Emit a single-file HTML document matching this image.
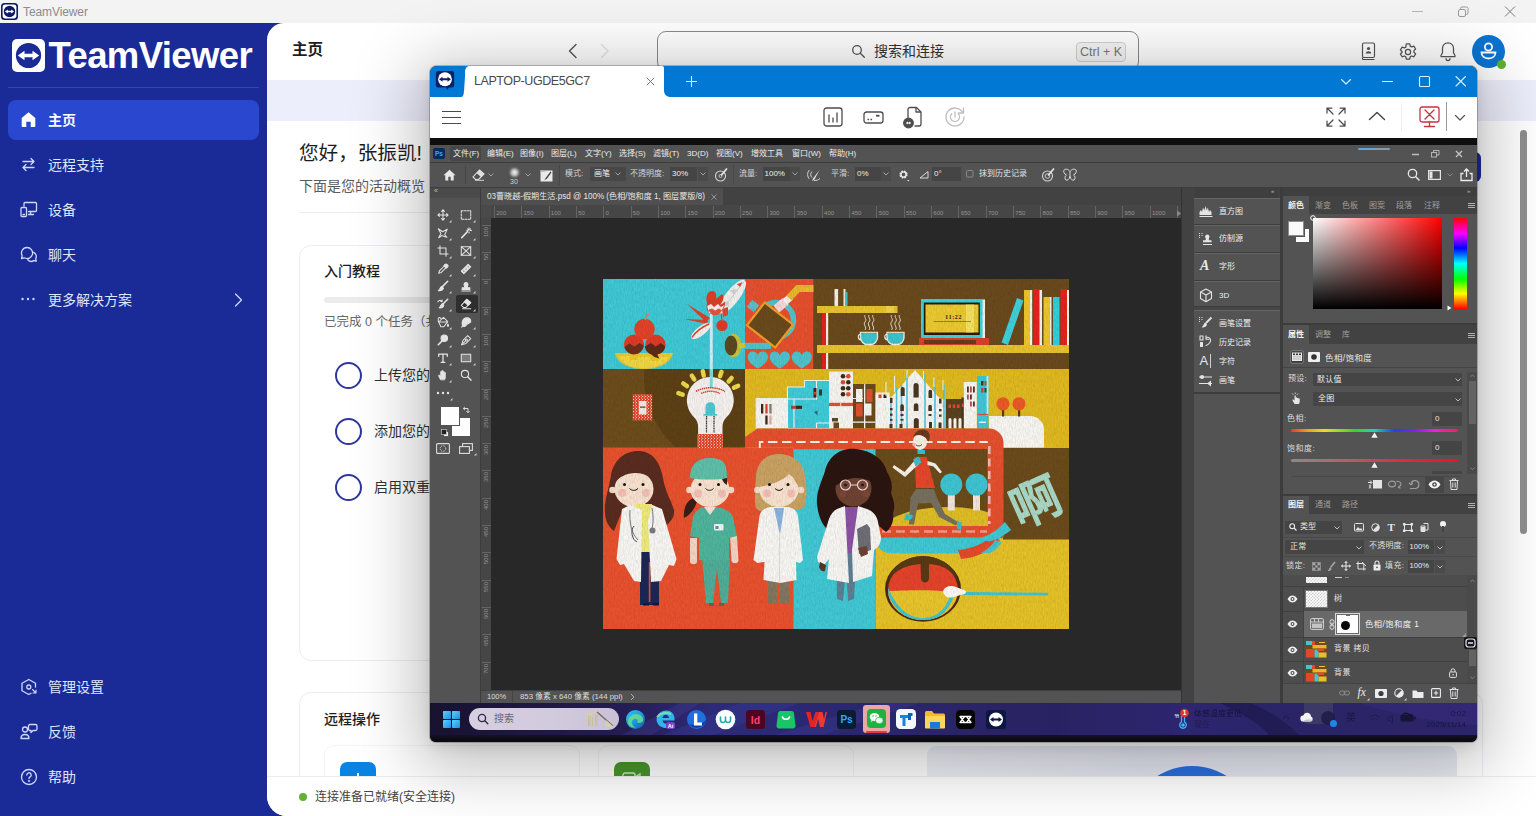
<!DOCTYPE html>
<html lang="zh-CN">
<head>
<meta charset="utf-8">
<title>TeamViewer</title>
<style>
*{box-sizing:border-box;margin:0;padding:0}
html,body{width:1536px;height:816px;overflow:hidden;background:#fff}
body{position:relative;font-family:"Liberation Sans","Noto Sans CJK SC",sans-serif;color:#222}
.abs{position:absolute}
svg{display:block;overflow:visible}
/* ---------- title bar ---------- */
#tbar{left:0;top:0;width:1536px;height:23px;background:#f3f3f3}
#tbar .t{left:23px;top:3.500px;font-size:12px;line-height:17px;color:#8b8b8b;letter-spacing:-.1px}
/* ---------- sidebar ---------- */
#side{left:0;top:23px;width:286px;height:793px;background:#1a2a96}
.nav{left:8px;width:251px;height:40px;border-radius:8px;color:#dfe6ff;font-size:14px;line-height:40px}
.nav span{position:absolute;left:40px;top:0;white-space:nowrap}
.nav svg{position:absolute;left:12px;top:11px}
.nav.on{background:#2948cf;color:#fff;font-weight:700}
/* ---------- main ---------- */
#main{left:267px;top:23px;width:1269px;height:793px;background:#fff;border-radius:17px 0 0 20px;overflow:hidden}
.card{border:1px solid #ececf2;border-radius:12px;background:#fff}
/* ---------- remote window ---------- */
#rw{left:430px;top:66px;width:1047px;height:676px;background:#111;border-radius:7px 7px 6px 6px;box-shadow:0 0 0 1px rgba(40,40,50,.28),0 12px 64px 14px rgba(0,0,0,.25),0 4px 14px rgba(0,0,0,.10)}
#rwin{left:0;top:0;width:1047px;height:676px;border-radius:7px 7px 6px 6px;overflow:hidden}
.ps{font-family:"Liberation Sans","Noto Sans CJK SC",sans-serif;color:#e6e6e6;font-size:8px;line-height:10px;white-space:nowrap}
.pst{position:absolute;white-space:nowrap;color:#e4e4e4;font-size:8px;line-height:10px}
.dim{color:#a0a0a0}
</style>
</head>
<body>
<!-- ================= TITLE BAR ================= -->
<div id="tbar" class="abs">
  <svg class="abs" style="left:1px;top:3px" width="17" height="17" viewBox="0 0 17 17"><rect x="0" y="0" width="17" height="17" rx="3.5" fill="#0b1a63"/><rect x="1.6" y="1.6" width="13.8" height="13.8" rx="2.6" fill="#fff"/><circle cx="8.5" cy="8.5" r="5.7" fill="#0b1a63"/><path d="M3.9 8.5l2.9-2v1.3h3.4V6.5l2.9 2-2.9 2V9.2H6.8v1.3z" fill="#fff"/></svg>
  <div class="abs t">TeamViewer</div>
  <svg class="abs" style="left:1410px;top:4px" width="110" height="16" viewBox="0 0 110 16" fill="none" stroke="#8d8d8d" stroke-width="1"><path d="M2 7.5h11" stroke="#b5b5b5"/><rect x="48.500" y="5.500" width="7" height="7" rx="1.500" stroke="#9a9a9a"/><path d="M50.500 5.500v-1a1.500 1.500 0 0 1 1.500-1.500h4.500a1.500 1.500 0 0 1 1.500 1.500v4.500a1.500 1.500 0 0 1-1.500 1.500h-1" stroke="#9a9a9a"/><path d="M95 2.500l10 10M105 2.500l-10 10" stroke="#777"/></svg>
</div>

<!-- ================= SIDEBAR ================= -->
<div id="side" class="abs">
  <!-- logo -->
  <svg class="abs" style="left:12px;top:16px" width="33" height="33" viewBox="0 0 33 33"><rect width="33" height="33" rx="5" fill="#fff"/><circle cx="16.500" cy="16.500" r="12.600" fill="#1a2a96"/><path d="M5.800 16.500l6.700-4.700v3h8v-3l6.700 4.700-6.700 4.700v-3h-8v3z" fill="#fff"/></svg>
  <div class="abs" id="logot" style="left:48.500px;top:12.500px;font-size:36.500px;line-height:40px;font-weight:700;color:#fff;letter-spacing:-.620px;white-space:nowrap">TeamViewer</div>
  <div class="abs" style="left:8px;top:64px;width:251px;height:1px;background:#3347ad"></div>

  <div class="abs nav on" style="top:77px"><svg width="17" height="17" viewBox="0 0 17 17"><path d="M8.500 1.200L1.700 7v8.300a.7.700 0 0 0 .7.700h3.900v-5.200h4.400V16h3.900a.7.700 0 0 0 .7-.7V7z" fill="#fff"/></svg><span>主页</span></div>
  <div class="abs nav" style="top:122px"><svg width="17" height="17" viewBox="0 0 17 17" fill="none" stroke="#cfd8ff" stroke-width="1.300" stroke-linecap="round" stroke-linejoin="round"><path d="M3 5.500h11M11 2.500l3 3-3 3M14 11.500H3M6 8.500l-3 3 3 3"/></svg><span>远程支持</span></div>
  <div class="abs nav" style="top:167px"><svg width="18" height="17" viewBox="0 0 18 17" fill="none" stroke="#cfd8ff" stroke-width="1.300" stroke-linecap="round" stroke-linejoin="round"><path d="M4 5V2.500a1 1 0 0 1 1-1h10.500a1 1 0 0 1 1 1v7a1 1 0 0 1-1 1H8.500M10.500 10.500v3M8.500 13.500h5"/><rect x="1" y="6.500" width="5.500" height="9" rx="1"/><path d="M3 13.500h1.500"/></svg><span>设备</span></div>
  <div class="abs nav" style="top:212px"><svg width="18" height="17" viewBox="0 0 18 17" fill="none" stroke="#cfd8ff" stroke-width="1.300" stroke-linecap="round" stroke-linejoin="round"><path d="M7 1.500a5.500 5.500 0 0 0-4.800 8.200L1.500 12.500l2.900-.7A5.500 5.500 0 1 0 7 1.500z"/><path d="M13.600 6.300a4.700 4.700 0 0 1 2.100 6.500l.6 2.400-2.500-.6a4.700 4.700 0 0 1-6-.9"/></svg><span>聊天</span></div>
  <div class="abs nav" style="top:257px"><svg width="17" height="17" viewBox="0 0 17 17" fill="#cfd8ff"><circle cx="2.500" cy="8" r="1.200"/><circle cx="8" cy="8" r="1.200"/><circle cx="13.500" cy="8" r="1.200"/></svg><span>更多解决方案</span>
    <svg style="left:226px;top:12px" width="9" height="16" viewBox="0 0 9 16" fill="none" stroke="#cfd8ff" stroke-width="1.300" stroke-linecap="round" stroke-linejoin="round"><path d="M1.500 2l6 6-6 6"/></svg></div>

  <div class="abs nav" style="top:644px"><svg width="18" height="18" viewBox="0 0 18 18" fill="none" stroke="#cfd8ff" stroke-width="1.300" stroke-linecap="round" stroke-linejoin="round"><path d="M15.500 9V5.300L8.800 1.500 2 5.300v7.400l6.800 3.800 2.200-1.200"/><circle cx="8.800" cy="9" r="2"/><path d="M12.500 11.500l3.500 3.500M16 12v3h-3" stroke-width="1.100"/></svg><span>管理设置</span></div>
  <div class="abs nav" style="top:689px"><svg width="18" height="18" viewBox="0 0 18 18" fill="none" stroke="#cfd8ff" stroke-width="1.300" stroke-linecap="round" stroke-linejoin="round"><circle cx="5" cy="6.500" r="2.500"/><path d="M1 15.500c0-2.500 1.800-4 4-4s4 1.500 4 4z"/><path d="M10 1.500h5.500a1.500 1.500 0 0 1 1.500 1.500v3a1.500 1.500 0 0 1-1.500 1.500H13l-2 2v-2h-1A1.500 1.500 0 0 1 8.500 6V3A1.500 1.500 0 0 1 10 1.500z"/></svg><span>反馈</span></div>
  <div class="abs nav" style="top:734px"><svg width="18" height="18" viewBox="0 0 18 18" fill="none" stroke="#cfd8ff" stroke-width="1.300" stroke-linecap="round" stroke-linejoin="round"><circle cx="9" cy="9" r="7.500"/><path d="M6.800 7a2.200 2.200 0 1 1 3.300 1.900c-.7.400-1.100.9-1.100 1.700"/><circle cx="9" cy="13" r=".4" fill="#cfd8ff"/></svg><span>帮助</span></div>
</div>

<!-- ================= MAIN ================= -->
<div id="main" class="abs">
  <div class="abs" style="left:25px;top:17px;font-size:15.500px;line-height:20px;font-weight:700;color:#1d1d1f">主页</div>
  <!-- nav arrows -->
  <svg class="abs" style="left:300px;top:20px" width="44" height="16" viewBox="0 0 44 16" fill="none" stroke-width="1.400" stroke-linecap="round" stroke-linejoin="round"><path d="M9 1.500L2.500 8 9 14.500" stroke="#555"/><path d="M34.500 1.500L41 8l-6.500 6.500" stroke="#e3e3e3"/></svg>
  <!-- search -->
  <div class="abs" style="left:390px;top:8px;width:482px;height:40px;border:1px solid #8a8a8a;border-radius:9px;background:#fff"></div>
  <svg class="abs" style="left:584px;top:20.500px" width="15" height="15" viewBox="0 0 15 15" fill="none" stroke="#555" stroke-width="1.300" stroke-linecap="round"><circle cx="6" cy="6" r="4.300"/><path d="M9.300 9.300l4 4"/></svg>
  <div class="abs" style="left:607px;top:18px;font-size:14px;line-height:20px;color:#333">搜索和连接</div>
  <div class="abs" style="left:809px;top:18.500px;width:50px;height:20.500px;border:1px solid #d3d3d3;border-radius:4px;background:#f6f6f6;font-size:12.500px;line-height:18.500px;text-align:center;color:#7a7a7a">Ctrl + K</div>
  <!-- header icons -->
  <svg class="abs" style="left:1094px;top:19px" width="16" height="19" viewBox="0 0 16 19" fill="none" stroke="#555" stroke-width="1.200"><rect x="1.500" y="1" width="12" height="14.500" rx="1.500"/><path d="M1.500 15.500v1a1 1 0 0 0 1 1h11"/><circle cx="7.500" cy="6.500" r="1.600" fill="#555" stroke="none"/><path d="M4.800 11.500c0-1.600 1.200-2.300 2.700-2.300s2.700.7 2.700 2.300z" fill="#555" stroke="none"/></svg>
  <svg class="abs" style="left:1131px;top:19px" width="20" height="20" viewBox="0 0 20 20" fill="none" stroke="#555" stroke-width="1.250" stroke-linejoin="round"><circle cx="10" cy="10" r="2.600"/><path d="M8.300 1.800h3.400l.5 2.300 1.500.8 2.200-.8 1.700 2.900-1.700 1.600v1.700l1.700 1.600-1.700 2.900-2.200-.8-1.500.8-.5 2.300H8.300l-.5-2.300-1.500-.8-2.200.8-1.700-2.900 1.700-1.600V9.600L2.400 8l1.700-2.900 2.200.8 1.500-.8z"/></svg>
  <svg class="abs" style="left:1172px;top:18px" width="18" height="21" viewBox="0 0 18 21" fill="none" stroke="#555" stroke-width="1.250" stroke-linecap="round" stroke-linejoin="round"><path d="M9 1.800a5.500 5.500 0 0 0-5.500 5.500v4.500L2 14.500v1h14v-1l-1.500-2.700V7.300A5.500 5.500 0 0 0 9 1.800z"/><path d="M7 17.500a2 2 0 0 0 4 0"/></svg>
  <div class="abs" style="left:1205px;top:12px;width:33px;height:33px;border-radius:50%;background:#0b74d1"></div>
  <svg class="abs" style="left:1213px;top:18px" width="17" height="20" viewBox="0 0 17 20" fill="none" stroke="#fff" stroke-width="1.800"><circle cx="8.500" cy="6" r="3.600"/><path d="M1.500 11.500h14c0 3.800-3 6-7 6s-7-2.200-7-6z"/></svg>
  <div class="abs" style="left:1229.500px;top:36.500px;width:9px;height:9px;border-radius:50%;background:#61b22f"></div>

  <!-- lavender band -->
  <div class="abs" style="left:0;top:57px;width:1269px;height:41px;background:#edeefb"></div>
  <!-- blue button sliver right of window -->
  <div class="abs" style="left:1188px;top:129px;width:26px;height:30px;border-radius:6px;background:#1c2a95"></div>
  <!-- greeting -->
  <div class="abs" style="left:32px;top:115px;font-size:19.600px;line-height:30px;color:#1d1d1f;letter-spacing:0;white-space:nowrap">您好，张振凯!</div>
  <div class="abs" style="left:32px;top:153px;font-size:14px;line-height:20px;color:#5c5c5c;white-space:nowrap">下面是您的活动概览</div>
  <div class="abs" style="left:32px;top:189px;width:1100px;height:1px;background:#ececf0"></div>
  <!-- card 1 -->
  <div class="abs card" style="left:32px;top:222px;width:620px;height:416px"></div>
  <div class="abs" style="left:57px;top:238px;font-size:14px;line-height:20px;font-weight:500;color:#1d1d1f">入门教程</div>
  <div class="abs" style="left:57px;top:274px;width:560px;height:6px;border-radius:3px;background:#ececec"></div>
  <div class="abs" style="left:57px;top:290px;font-size:12.500px;line-height:18px;color:#6a6a6a;white-space:nowrap">已完成 0 个任务（共</div>
  <div class="abs" style="left:67.500px;top:338.500px;width:27px;height:27px;border-radius:50%;border:2px solid #2d379e"></div>
  <div class="abs" style="left:67.500px;top:394.500px;width:27px;height:27px;border-radius:50%;border:2px solid #2d379e"></div>
  <div class="abs" style="left:67.500px;top:450.500px;width:27px;height:27px;border-radius:50%;border:2px solid #2d379e"></div>
  <div class="abs" style="left:107px;top:342px;font-size:14px;line-height:20px;color:#333;white-space:nowrap">上传您的</div>
  <div class="abs" style="left:107px;top:398px;font-size:14px;line-height:20px;color:#333;white-space:nowrap">添加您的</div>
  <div class="abs" style="left:107px;top:454px;font-size:14px;line-height:20px;color:#333;white-space:nowrap">启用双重</div>
  <!-- card 2 -->
  <div class="abs card" style="left:32px;top:669px;width:1184px;height:200px"></div>
  <div class="abs" style="left:57px;top:686px;font-size:14px;line-height:20px;font-weight:500;color:#1d1d1f">远程操作</div>
  <div class="abs" style="left:57px;top:722px;width:256px;height:100px;border:1px solid #f4f4f7;border-radius:10px"></div>
  <div class="abs" style="left:331px;top:722px;width:256px;height:100px;border:1px solid #f4f4f7;border-radius:10px"></div>
  <div class="abs" style="left:73px;top:739px;width:36px;height:36px;border-radius:7px;background:#0a84e3"></div>
  <div class="abs" style="left:90px;top:750px;width:2px;height:10px;background:#fff"></div>
  <div class="abs" style="left:347px;top:739px;width:36px;height:36px;border-radius:7px;background:#47962b"></div>
  <svg class="abs" style="left:355px;top:749px" width="20" height="12" viewBox="0 0 20 12" fill="none" stroke="#cfe8c4" stroke-width="1.300"><rect x="1" y="1" width="12" height="10" rx="2"/><path d="M13 5l5-3v8"/></svg>
  <!-- right illustration peeking -->
  <div class="abs" style="left:660px;top:722.500px;width:530px;height:60px;border-radius:9px;background:linear-gradient(90deg,#eff0f7,#e4e6f1 40%,#e9ebf4)"></div>
  <div class="abs" style="left:860px;top:742.500px;width:130px;height:130px;border-radius:50%;background:#2a6fe0"></div>
  <!-- scrollbar -->
  <div class="abs" style="left:1253px;top:107px;width:7px;height:404px;border-radius:4px;background:#8f8f8f"></div>
  <!-- status bar -->
  <div class="abs" style="left:0;top:753px;width:1269px;height:40px;background:#fff;border-top:1px solid #ededf0"></div>
  <div class="abs" style="left:32px;top:770px;width:8px;height:8px;border-radius:50%;background:#63b233"></div>
  <div class="abs" style="left:48px;top:765px;font-size:12px;line-height:18px;color:#444;white-space:nowrap">连接准备已就绪(安全连接)</div>
</div>

<!-- ================= REMOTE WINDOW ================= -->
<div id="rw" class="abs"><div id="rwin" class="abs">
  <!-- tab bar -->
  <div class="abs" style="left:0;top:0;width:1047px;height:31px;background:#0078d4"></div>
  <svg class="abs" style="left:4.500px;top:4px" width="20" height="21" viewBox="0 0 24 25"><path d="M4 1h16a3 3 0 0 1 3 3v14a3 3 0 0 1-3 3h-3l-3 3v-3H4a3 3 0 0 1-3-3V4a3 3 0 0 1 3-3z" fill="#0b1f6b"/><circle cx="12" cy="11" r="8.300" fill="#fff"/><path d="M4.800 11l4.200-3v1.900h6V8l4.200 3-4.200 3v-1.900H9V14z" fill="#0b1f6b"/></svg>
  <div class="abs" style="left:35px;top:0;width:199px;height:31px;background:#fff;border-radius:6px 2px 0 0"></div>
  <svg class="abs" style="left:31px;top:0" width="9" height="31" viewBox="0 0 9 31"><path d="M9 0C5 0 4.500 3 4.300 6L3 25c-.3 4-1 6-3 6h9z" fill="#fff"/></svg>
    <svg class="abs" style="left:234px;top:20px" width="7" height="11" viewBox="0 0 7 11"><path d="M0 0v5a6 6 0 0 0 6 6H0z" fill="#fff"/></svg>
  <div class="abs" style="left:44px;top:6px;font-size:12.500px;line-height:18px;color:#4a4a4a;white-space:nowrap;letter-spacing:-.420px">LAPTOP-UGDE5GC7</div>
  <svg class="abs" style="left:216px;top:11px" width="9" height="9" viewBox="0 0 9 9" stroke="#777" stroke-width="1" fill="none"><path d="M.8.800l7.400 7.400M8.200.800L.8 8.200"/></svg>
  <svg class="abs" style="left:256px;top:10px" width="11" height="11" viewBox="0 0 11 11" stroke="#d6ecff" stroke-width="1.100" fill="none"><path d="M5.500 0v11M0 5.500h11"/></svg>
  <!-- window controls -->
  <svg class="abs" style="left:909px;top:9px" width="130" height="14" viewBox="0 0 130 14" stroke="#d9edff" stroke-width="1.150" fill="none" stroke-linecap="round" stroke-linejoin="round"><path d="M2.500 4.500l4.500 4.500 4.500-4.500"/><path d="M43.500 6.500h10"/><rect x="80.500" y="1.500" width="10" height="10" rx="1"/><path d="M117 1.500l9.500 9.500M126.500 1.500L117 11"/></svg>
  <!-- toolbar -->
  <div class="abs" style="left:0;top:31px;width:1047px;height:41px;background:#fff"></div>
  <svg class="abs" style="left:12px;top:45px" width="20" height="14" viewBox="0 0 20 14" stroke="#4a4a4a" stroke-width="1" fill="none"><path d="M0 .5h19M0 6.500h19M0 12.500h19"/></svg>
  <svg class="abs" style="left:393px;top:41px" width="20" height="20" viewBox="0 0 20 20" stroke="#4d4d4d" stroke-width="1.300" fill="none" stroke-linecap="round"><rect x="1" y="1" width="18" height="18" rx="2.500"/><path d="M6 15V8M10 15v-4M14 15V6"/></svg>
  <svg class="abs" style="left:433px;top:45px" width="21" height="13" viewBox="0 0 21 13" stroke="#4d4d4d" stroke-width="1.300" fill="none"><rect x="1" y="1" width="19" height="11" rx="2.500"/><path d="M4.500 8.500h1.600M7.500 8.500h1.600" stroke-width="1.600"/><rect x="13" y="3.800" width="3.500" height="1.800" fill="#4d4d4d" stroke="none"/></svg>
  <svg class="abs" style="left:472px;top:40px" width="21" height="23" viewBox="0 0 21 23" stroke="#4d4d4d" stroke-width="1.300" fill="none" stroke-linejoin="round"><path d="M6 12V3.500A2 2 0 0 1 8 1.500h6.500L19 6v12a2 2 0 0 1-2 2h-4.500"/><path d="M14 1.500V6h5"/><circle cx="6.500" cy="17" r="4.800" fill="#4d4d4d"/><path d="M3.800 17l2-1.500v1h1.400v-1l2 1.500-2 1.500v-1H5.800v1z" fill="#fff" stroke="none"/></svg>
  <svg class="abs" style="left:514px;top:40px" width="22" height="22" viewBox="0 0 22 22" stroke="#bdbdbd" stroke-width="1.300" fill="none" stroke-linecap="round" stroke-linejoin="round"><path d="M18.800 6.500A9 9 0 1 0 20 11"/><path d="M19.500 2v5h-5"/><path d="M11 6v5"/><path d="M7.800 7.800a4.500 4.500 0 1 0 6.400 0"/></svg>
  <svg class="abs" style="left:896px;top:41px" width="20" height="20" viewBox="0 0 20 20" stroke="#4d4d4d" stroke-width="1.250" fill="none" stroke-linecap="round" stroke-linejoin="round"><path d="M1 6V1h5M1 1l6 6M14 1h5v5M19 1l-6 6M1 14v5h5M1 19l6-6M19 14v5h-5M19 19l-6-6"/></svg>
  <svg class="abs" style="left:938px;top:45px" width="18" height="10" viewBox="0 0 18 10" stroke="#444" stroke-width="1.400" fill="none" stroke-linecap="round" stroke-linejoin="round"><path d="M1.500 8.500L9 1.500l7.500 7"/></svg>
  <div class="abs" style="left:971px;top:37px;width:1px;height:28px;background:#ededed"></div>
  <svg class="abs" style="left:989px;top:40px" width="21" height="22" viewBox="0 0 21 22" stroke="#c7323f" stroke-width="1.300" fill="none" stroke-linecap="round" stroke-linejoin="round"><rect x="1" y="1" width="19" height="15" rx="2"/><path d="M6 4l9 9M15 4l-9 9M10.500 16v4M5.500 20.500h10"/></svg>
  <div class="abs" style="left:1016px;top:36px;width:1px;height:29px;background:#9a9a9a"></div>
  <svg class="abs" style="left:1024px;top:48px" width="12" height="8" viewBox="0 0 12 8" stroke="#555" stroke-width="1.200" fill="none" stroke-linecap="round" stroke-linejoin="round"><path d="M1.500 1.500L6 6l4.500-4.500"/></svg>
  <!-- black gap -->
  <div class="abs" style="left:0;top:72px;width:1047px;height:8px;background:#0e0e0e"></div>
  <div class="abs" style="left:0px;top:79px;width:1047px;height:558px;background:#535353;"></div>
  <div class="abs" style="left:0px;top:79px;width:1047px;height:17px;background:#535353;"></div>
  <div class="abs" style="left:0px;top:96px;width:1047px;height:1px;background:#3c3c3c;"></div>
  <svg class="abs" style="left:3px;top:82px" width="12" height="11" viewBox="0 0 12 11" ><rect width="12" height="11" rx="2" fill="#0a2a5c"/><text x="6" y="8" font-size="6.500" font-weight="700" text-anchor="middle" fill="#35a8ff" font-family="Liberation Sans,sans-serif">Ps</text></svg>
  <div class="abs" style="left:20px;top:80px;width:31px;height:15px;background:#474747;border-radius:2px"></div>
  <div class="pst" style="left:23px;top:82.5px;color:#ececec;font-size:8px;">文件(F)</div>
  <div class="pst" style="left:57px;top:82.5px;color:#ececec;font-size:8px;">编辑(E)</div>
  <div class="pst" style="left:90px;top:82.5px;color:#ececec;font-size:8px;">图像(I)</div>
  <div class="pst" style="left:121px;top:82.5px;color:#ececec;font-size:8px;">图层(L)</div>
  <div class="pst" style="left:155px;top:82.5px;color:#ececec;font-size:8px;">文字(Y)</div>
  <div class="pst" style="left:189px;top:82.5px;color:#ececec;font-size:8px;">选择(S)</div>
  <div class="pst" style="left:223px;top:82.5px;color:#ececec;font-size:8px;">滤镜(T)</div>
  <div class="pst" style="left:257px;top:82.5px;color:#ececec;font-size:8px;">3D(D)</div>
  <div class="pst" style="left:286px;top:82.5px;color:#ececec;font-size:8px;">视图(V)</div>
  <div class="pst" style="left:321px;top:82.5px;color:#ececec;font-size:8px;">增效工具</div>
  <div class="pst" style="left:362px;top:82.5px;color:#ececec;font-size:8px;">窗口(W)</div>
  <div class="pst" style="left:399px;top:82.5px;color:#ececec;font-size:8px;">帮助(H)</div>
  <div class="abs" style="left:928px;top:82px;width:32px;height:2px;background:linear-gradient(90deg,#5aa7e8 40%,#8a98a8 60%);border-radius:1px"></div>
  <svg class="abs" style="left:980px;top:82px" width="56" height="11" viewBox="0 0 56 11" ><path d="M2 6.500h7" stroke="#bdbdbd" stroke-width="1.600"/><rect x="21.500" y="4.500" width="5" height="4.500" stroke="#b5b5b5" fill="none"/><path d="M23.500 4.500v-2h5.500v4.500h-2.500" stroke="#b5b5b5" fill="none"/><path d="M46 3l6 6M52 3l-6 6" stroke="#c4c4c4" stroke-width="1.400"/></svg>
  <div class="abs" style="left:0px;top:97px;width:1047px;height:24px;background:#535353;"></div>
  <div class="abs" style="left:0px;top:121px;width:1047px;height:1px;background:#3e3e3e;"></div>
  <svg class="abs" style="left:13px;top:103px" width="13" height="12" viewBox="0 0 13 12" ><path d="M6.500 .8L.5 6.200h1.800V11.500h3V7.800h2.400v3.700h3V6.200h1.800z" fill="#e8e8e8"/></svg>
  <div class="abs" style="left:35px;top:100px;width:1px;height:18px;background:#454545;"></div>
  <svg class="abs" style="left:42px;top:103px" width="13" height="12" viewBox="0 0 13 12" ><path d="M7.500 1l4.500 4-5.500 5.500H3.500L1 8z" fill="none" stroke="#e0e0e0" stroke-width="1.100"/><path d="M7.500 1l4.500 4-3 3-4.500-4z" fill="#e0e0e0"/><path d="M3 11.300h9" stroke="#e0e0e0" stroke-width=".9"/></svg>
  <svg class="abs" style="left:58px;top:107px" width="6" height="4" viewBox="0 0 6 4" ><path d="M.5.500L3 3 5.500.500" fill="none" stroke="#aaa" stroke-width=".9"/></svg>
  <div class="abs" style="left:78px;top:100px;width:13px;height:13px;background:radial-gradient(circle,#f2f2f2 0%,#bdbdbd 30%,rgba(120,120,120,.5) 55%,rgba(83,83,83,0) 72%);border-radius:50%"></div>
  <div class="pst" style="left:80px;top:110.5px;color:#cfcfcf;font-size:7px;">30</div>
  <svg class="abs" style="left:95px;top:107px" width="6" height="4" viewBox="0 0 6 4" ><path d="M.5.500L3 3 5.500.500" fill="none" stroke="#aaa" stroke-width=".9"/></svg>
  <svg class="abs" style="left:110px;top:103px" width="13" height="13" viewBox="0 0 13 13" ><rect x=".5" y="1.500" width="12" height="11" fill="#e9e9e9"/><path d="M.5 1.500h4l1.200 1.500H.5z" fill="#bbb"/><path d="M10.500 2.500L6 8.500l-1.700 2.700 2.800-1.700 4.300-6z" fill="#444"/></svg>
  <div class="abs" style="left:129px;top:99px;width:1px;height:20px;background:#474747;"></div>
  <div class="pst" style="left:135px;top:102.5px;color:#d4d4d4;font-size:8px;">模式:</div>
  <div class="abs" style="left:160px;top:101px;width:36px;height:14px;background:#474747;border-radius:2px"></div>
  <div class="pst" style="left:164px;top:103px;color:#ececec;font-size:8px;">画笔</div>
  <svg class="abs" style="left:185px;top:106px" width="6" height="4" viewBox="0 0 6 4" ><path d="M.5.500L3 3 5.500.500" fill="none" stroke="#aaa" stroke-width=".9"/></svg>
  <div class="pst" style="left:200px;top:102.5px;color:#d4d4d4;font-size:8px;">不透明度:</div>
  <div class="abs" style="left:240px;top:101px;width:27px;height:14px;background:#454545;"></div>
  <div class="pst" style="left:242px;top:103px;color:#ededed;font-size:8px;">30%</div>
  <div class="abs" style="left:268px;top:101px;width:10px;height:14px;background:#4a4a4a;"></div>
  <svg class="abs" style="left:270px;top:106px" width="6" height="4" viewBox="0 0 6 4" ><path d="M.5.500L3 3 5.500.500" fill="none" stroke="#aaa" stroke-width=".9"/></svg>
  <svg class="abs" style="left:284px;top:102px" width="14" height="14" viewBox="0 0 14 14" ><circle cx="6.500" cy="8" r="5" fill="none" stroke="#d5d5d5" stroke-width="1.100"/><circle cx="6.500" cy="8" r="1.500" fill="none" stroke="#d5d5d5" stroke-width=".8"/><path d="M7 7.500L13 .5" stroke="#e5e5e5" stroke-width="1.700"/></svg>
  <div class="abs" style="left:303px;top:99px;width:1px;height:20px;background:#474747;"></div>
  <div class="pst" style="left:309px;top:102.5px;color:#d4d4d4;font-size:8px;">流量:</div>
  <div class="abs" style="left:333px;top:101px;width:27px;height:14px;background:#454545;"></div>
  <div class="pst" style="left:334.5px;top:103px;color:#ededed;font-size:8px;">100%</div>
  <div class="abs" style="left:360px;top:101px;width:10px;height:14px;background:#4a4a4a;"></div>
  <svg class="abs" style="left:362px;top:106px" width="6" height="4" viewBox="0 0 6 4" ><path d="M.5.500L3 3 5.500.500" fill="none" stroke="#aaa" stroke-width=".9"/></svg>
  <svg class="abs" style="left:376px;top:102px" width="15" height="14" viewBox="0 0 15 14" ><path d="M3.500 2C1 4 1 9 3.500 11M6 3.500C4.300 5 4.300 8 6 9.500" fill="none" stroke="#d5d5d5" stroke-width="1"/><path d="M13.500 2L7 10.500l-1 2.500 2.500-1.500z" fill="#e0e0e0"/><path d="M8 12.500c3 0 4-.5 6-2" stroke="#d5d5d5" fill="none" stroke-width="1"/></svg>
  <div class="pst" style="left:401px;top:102.5px;color:#d4d4d4;font-size:8px;">平滑:</div>
  <div class="abs" style="left:425px;top:101px;width:26px;height:14px;background:#454545;"></div>
  <div class="pst" style="left:427px;top:103px;color:#ededed;font-size:8px;">0%</div>
  <div class="abs" style="left:451px;top:101px;width:10px;height:14px;background:#4a4a4a;"></div>
  <svg class="abs" style="left:453px;top:106px" width="6" height="4" viewBox="0 0 6 4" ><path d="M.5.500L3 3 5.500.500" fill="none" stroke="#aaa" stroke-width=".9"/></svg>
  <svg class="abs" style="left:468px;top:103px" width="12" height="13" viewBox="0 0 12 13" ><circle cx="5.500" cy="5.500" r="3" fill="none" stroke="#e6e6e6" stroke-width="2.200" stroke-dasharray="1.500 .86"/><circle cx="5.500" cy="5.500" r="2.600" fill="none" stroke="#e6e6e6" stroke-width="1.300"/><path d="M9 11h2.500l-1.250 1.500z" fill="#ddd"/></svg>
  <svg class="abs" style="left:489px;top:104px" width="11" height="9" viewBox="0 0 11 9" ><path d="M1 8L9 1.500V8z" fill="none" stroke="#d8d8d8" stroke-width="1"/></svg>
  <div class="abs" style="left:502px;top:101px;width:29px;height:14px;background:#454545;"></div>
  <div class="pst" style="left:504px;top:103px;color:#ededed;font-size:8px;">0°</div>
  <svg class="abs" style="left:536px;top:104px" width="8" height="8" viewBox="0 0 8 8" ><rect x=".5" y=".5" width="6.500" height="6.500" rx="1" fill="none" stroke="#8a8a8a"/></svg>
  <div class="pst" style="left:549px;top:103px;color:#e2e2e2;font-size:8px;">抹到历史记录</div>
  <svg class="abs" style="left:611px;top:102px" width="14" height="14" viewBox="0 0 14 14" ><circle cx="6.500" cy="8" r="5" fill="none" stroke="#d5d5d5" stroke-width="1.100"/><circle cx="6.500" cy="8" r="2.300" fill="none" stroke="#d5d5d5" stroke-width=".9"/><path d="M7 7.500L13 .5" stroke="#e5e5e5" stroke-width="1.700"/></svg>
  <svg class="abs" style="left:633px;top:102px" width="14" height="14" viewBox="0 0 14 14" ><path d="M7 3.500C5.500 1 2 .5 1 2c-.8 1.500 0 4 2.500 5C1.500 8 1.500 11 3 12c1.500.8 3.500-1 4-3.500C7.500 11 9.500 12.800 11 12c1.500-1 1.500-4-.5-5C13 6 13.800 3.500 13 2 12 .5 8.500 1 7 3.500zM7 3.500v6" fill="none" stroke="#dcdcdc" stroke-width="1"/></svg>
  <svg class="abs" style="left:977px;top:102px" width="14" height="14" viewBox="0 0 14 14" ><circle cx="5.500" cy="5.500" r="4.200" fill="none" stroke="#e8e8e8" stroke-width="1.300"/><path d="M8.700 8.700l3.800 3.800" stroke="#e8e8e8" stroke-width="1.500"/></svg>
  <svg class="abs" style="left:998px;top:104px" width="13" height="10" viewBox="0 0 13 10" ><rect x=".6" y=".6" width="11.800" height="8.800" fill="none" stroke="#e3e3e3" stroke-width="1.200"/><rect x="1.500" y="1.500" width="3" height="7" fill="#e3e3e3"/></svg>
  <svg class="abs" style="left:1017px;top:107px" width="6" height="4" viewBox="0 0 6 4" ><path d="M.5.500L3 3 5.500.500" fill="none" stroke="#8f8f8f" stroke-width=".9"/></svg>
  <svg class="abs" style="left:1030px;top:102px" width="13" height="13" viewBox="0 0 13 13" ><path d="M3.500 5.500H1v7h11v-7H9.500" fill="none" stroke="#ececec" stroke-width="1.300"/><path d="M6.500 9V1.500M4 3.500l2.500-2.500L9 3.500" fill="none" stroke="#ececec" stroke-width="1.300"/></svg>
  <div class="abs" style="left:0px;top:122px;width:1047px;height:17px;background:#424242;"></div>
  <div class="abs" style="left:0px;top:122px;width:50px;height:515px;background:#535353;"></div>
  <div class="abs" style="left:0px;top:122px;width:50px;height:10px;background:#4a4a4a;"></div>
  <div class="pst" style="left:4px;top:119.5px;color:#bdbdbd;font-size:7px;">«</div>
  <div class="abs" style="left:49.5px;top:122px;width:1px;height:515px;background:#3c3c3c;"></div>
  <div class="abs" style="left:50.5px;top:122px;width:242px;height:17px;background:#4f4f4f;"></div>
  <div class="pst" style="left:57px;top:125.5px;color:#e6e6e6;font-size:8.15px;letter-spacing:-.02px">03曹晓越-假期生活.psd @ 100% (色相/饱和度 1, 图层蒙版/8)</div>
  <svg class="abs" style="left:280.5px;top:127.5px" width="6" height="6" viewBox="0 0 6 6" ><path d="M.5.500l5 5M5.500.500l-5 5" stroke="#a5a5a5" stroke-width=".8"/></svg>
  <div class="abs" style="left:50.5px;top:139px;width:700.5px;height:13px;background:#464646;"></div>
  <div class="abs" style="left:50.5px;top:152px;width:10.5px;height:472px;background:#464646;"></div>
  <div class="abs" style="left:50.5px;top:139px;width:10.5px;height:13px;background:#4a4a4a;"></div>
  <div class="abs" style="left:61px;top:152px;width:690px;height:472px;background:#282828;"></div>
  <div class="abs" style="left:63.5px;top:140px;width:1px;height:12px;background:#646464;"></div>
  <div class="pst" style="left:66.22px;top:141.5px;color:#939393;font-size:6px;">200</div>
  <div class="abs" style="left:91px;top:140px;width:1px;height:12px;background:#646464;"></div>
  <div class="pst" style="left:93.54px;top:141.5px;color:#939393;font-size:6px;">150</div>
  <div class="abs" style="left:118.5px;top:140px;width:1px;height:12px;background:#646464;"></div>
  <div class="pst" style="left:120.86px;top:141.5px;color:#939393;font-size:6px;">100</div>
  <div class="abs" style="left:145.5px;top:140px;width:1px;height:12px;background:#646464;"></div>
  <div class="pst" style="left:148.18px;top:141.5px;color:#939393;font-size:6px;">50</div>
  <div class="abs" style="left:173px;top:140px;width:1px;height:12px;background:#646464;"></div>
  <div class="pst" style="left:175.5px;top:141.5px;color:#939393;font-size:6px;">0</div>
  <div class="abs" style="left:200.5px;top:140px;width:1px;height:12px;background:#646464;"></div>
  <div class="pst" style="left:202.82px;top:141.5px;color:#939393;font-size:6px;">50</div>
  <div class="abs" style="left:227.5px;top:140px;width:1px;height:12px;background:#646464;"></div>
  <div class="pst" style="left:230.14px;top:141.5px;color:#939393;font-size:6px;">100</div>
  <div class="abs" style="left:255px;top:140px;width:1px;height:12px;background:#646464;"></div>
  <div class="pst" style="left:257.46px;top:141.5px;color:#939393;font-size:6px;">150</div>
  <div class="abs" style="left:282.5px;top:140px;width:1px;height:12px;background:#646464;"></div>
  <div class="pst" style="left:284.78px;top:141.5px;color:#939393;font-size:6px;">200</div>
  <div class="abs" style="left:309.5px;top:140px;width:1px;height:12px;background:#646464;"></div>
  <div class="pst" style="left:312.1px;top:141.5px;color:#939393;font-size:6px;">250</div>
  <div class="abs" style="left:337px;top:140px;width:1px;height:12px;background:#646464;"></div>
  <div class="pst" style="left:339.42px;top:141.5px;color:#939393;font-size:6px;">300</div>
  <div class="abs" style="left:364px;top:140px;width:1px;height:12px;background:#646464;"></div>
  <div class="pst" style="left:366.74px;top:141.5px;color:#939393;font-size:6px;">350</div>
  <div class="abs" style="left:391.5px;top:140px;width:1px;height:12px;background:#646464;"></div>
  <div class="pst" style="left:394.06px;top:141.5px;color:#939393;font-size:6px;">400</div>
  <div class="abs" style="left:419px;top:140px;width:1px;height:12px;background:#646464;"></div>
  <div class="pst" style="left:421.38px;top:141.5px;color:#939393;font-size:6px;">450</div>
  <div class="abs" style="left:446px;top:140px;width:1px;height:12px;background:#646464;"></div>
  <div class="pst" style="left:448.7px;top:141.5px;color:#939393;font-size:6px;">500</div>
  <div class="abs" style="left:473.5px;top:140px;width:1px;height:12px;background:#646464;"></div>
  <div class="pst" style="left:476.02px;top:141.5px;color:#939393;font-size:6px;">550</div>
  <div class="abs" style="left:501px;top:140px;width:1px;height:12px;background:#646464;"></div>
  <div class="pst" style="left:503.34px;top:141.5px;color:#939393;font-size:6px;">600</div>
  <div class="abs" style="left:528px;top:140px;width:1px;height:12px;background:#646464;"></div>
  <div class="pst" style="left:530.66px;top:141.5px;color:#939393;font-size:6px;">650</div>
  <div class="abs" style="left:555.5px;top:140px;width:1px;height:12px;background:#646464;"></div>
  <div class="pst" style="left:557.98px;top:141.5px;color:#939393;font-size:6px;">700</div>
  <div class="abs" style="left:583px;top:140px;width:1px;height:12px;background:#646464;"></div>
  <div class="pst" style="left:585.3px;top:141.5px;color:#939393;font-size:6px;">750</div>
  <div class="abs" style="left:610px;top:140px;width:1px;height:12px;background:#646464;"></div>
  <div class="pst" style="left:612.62px;top:141.5px;color:#939393;font-size:6px;">800</div>
  <div class="abs" style="left:637.5px;top:140px;width:1px;height:12px;background:#646464;"></div>
  <div class="pst" style="left:639.94px;top:141.5px;color:#939393;font-size:6px;">850</div>
  <div class="abs" style="left:665px;top:140px;width:1px;height:12px;background:#646464;"></div>
  <div class="pst" style="left:667.26px;top:141.5px;color:#939393;font-size:6px;">900</div>
  <div class="abs" style="left:692px;top:140px;width:1px;height:12px;background:#646464;"></div>
  <div class="pst" style="left:694.58px;top:141.5px;color:#939393;font-size:6px;">950</div>
  <div class="abs" style="left:719.5px;top:140px;width:1px;height:12px;background:#646464;"></div>
  <div class="pst" style="left:721.9px;top:141.5px;color:#939393;font-size:6px;">1000</div>
  <div class="abs" style="left:746.5px;top:140px;width:1px;height:12px;background:#646464;"></div>
  <svg class="abs" style="left:746px;top:143.5px" width="5" height="7" viewBox="0 0 5 7" ><path d="M1 .5v6l4-3z" fill="#8a8a8a"/></svg>
  <div class="abs" style="left:51.5px;top:158.5px;width:9.5px;height:1px;background:#646464;"></div>
  <div class="pst" style="left:51.5px;top:170.56px;color:#939393;font-size:6px;line-height:8px;transform-origin:0 0;transform:rotate(-90deg)">100</div>
  <div class="abs" style="left:51.5px;top:185.5px;width:9.5px;height:1px;background:#646464;"></div>
  <div class="pst" style="left:51.5px;top:194.48px;color:#939393;font-size:6px;line-height:8px;transform-origin:0 0;transform:rotate(-90deg)">50</div>
  <div class="abs" style="left:51.5px;top:213px;width:9.5px;height:1px;background:#646464;"></div>
  <div class="pst" style="left:51.5px;top:218.4px;color:#939393;font-size:6px;line-height:8px;transform-origin:0 0;transform:rotate(-90deg)">0</div>
  <div class="abs" style="left:51.5px;top:240.5px;width:9.5px;height:1px;background:#646464;"></div>
  <div class="pst" style="left:51.5px;top:249.12px;color:#939393;font-size:6px;line-height:8px;transform-origin:0 0;transform:rotate(-90deg)">50</div>
  <div class="abs" style="left:51.5px;top:267.5px;width:9.5px;height:1px;background:#646464;"></div>
  <div class="pst" style="left:51.5px;top:279.84px;color:#939393;font-size:6px;line-height:8px;transform-origin:0 0;transform:rotate(-90deg)">100</div>
  <div class="abs" style="left:51.5px;top:295px;width:9.5px;height:1px;background:#646464;"></div>
  <div class="pst" style="left:51.5px;top:307.16px;color:#939393;font-size:6px;line-height:8px;transform-origin:0 0;transform:rotate(-90deg)">150</div>
  <div class="abs" style="left:51.5px;top:322.5px;width:9.5px;height:1px;background:#646464;"></div>
  <div class="pst" style="left:51.5px;top:334.48px;color:#939393;font-size:6px;line-height:8px;transform-origin:0 0;transform:rotate(-90deg)">200</div>
  <div class="abs" style="left:51.5px;top:349.5px;width:9.5px;height:1px;background:#646464;"></div>
  <div class="pst" style="left:51.5px;top:361.8px;color:#939393;font-size:6px;line-height:8px;transform-origin:0 0;transform:rotate(-90deg)">250</div>
  <div class="abs" style="left:51.5px;top:377px;width:9.5px;height:1px;background:#646464;"></div>
  <div class="pst" style="left:51.5px;top:389.12px;color:#939393;font-size:6px;line-height:8px;transform-origin:0 0;transform:rotate(-90deg)">300</div>
  <div class="abs" style="left:51.5px;top:404px;width:9.5px;height:1px;background:#646464;"></div>
  <div class="pst" style="left:51.5px;top:416.44px;color:#939393;font-size:6px;line-height:8px;transform-origin:0 0;transform:rotate(-90deg)">350</div>
  <div class="abs" style="left:51.5px;top:431.5px;width:9.5px;height:1px;background:#646464;"></div>
  <div class="pst" style="left:51.5px;top:443.76px;color:#939393;font-size:6px;line-height:8px;transform-origin:0 0;transform:rotate(-90deg)">400</div>
  <div class="abs" style="left:51.5px;top:459px;width:9.5px;height:1px;background:#646464;"></div>
  <div class="pst" style="left:51.5px;top:471.08px;color:#939393;font-size:6px;line-height:8px;transform-origin:0 0;transform:rotate(-90deg)">450</div>
  <div class="abs" style="left:51.5px;top:486px;width:9.5px;height:1px;background:#646464;"></div>
  <div class="pst" style="left:51.5px;top:498.4px;color:#939393;font-size:6px;line-height:8px;transform-origin:0 0;transform:rotate(-90deg)">500</div>
  <div class="abs" style="left:51.5px;top:513.5px;width:9.5px;height:1px;background:#646464;"></div>
  <div class="pst" style="left:51.5px;top:525.72px;color:#939393;font-size:6px;line-height:8px;transform-origin:0 0;transform:rotate(-90deg)">550</div>
  <div class="abs" style="left:51.5px;top:541px;width:9.5px;height:1px;background:#646464;"></div>
  <div class="pst" style="left:51.5px;top:553.04px;color:#939393;font-size:6px;line-height:8px;transform-origin:0 0;transform:rotate(-90deg)">600</div>
  <div class="abs" style="left:51.5px;top:568px;width:9.5px;height:1px;background:#646464;"></div>
  <div class="pst" style="left:51.5px;top:580.36px;color:#939393;font-size:6px;line-height:8px;transform-origin:0 0;transform:rotate(-90deg)">650</div>
  <div class="abs" style="left:51.5px;top:595.5px;width:9.5px;height:1px;background:#646464;"></div>
  <div class="pst" style="left:51.5px;top:607.68px;color:#939393;font-size:6px;line-height:8px;transform-origin:0 0;transform:rotate(-90deg)">700</div>
  <div class="abs" style="left:50.5px;top:624px;width:700.5px;height:13px;background:#535353;"></div>
  <div class="abs" style="left:50.5px;top:624px;width:700.5px;height:1px;background:#404040;"></div>
  <div class="pst" style="left:57px;top:625.5px;color:#dcdcdc;font-size:7.5px;">100%</div>
  <div class="abs" style="left:82px;top:625px;width:1px;height:12px;background:#444;"></div>
  <div class="pst" style="left:90px;top:625.5px;color:#dcdcdc;font-size:7.8px;">853 像素 x 640 像素 (144 ppi)</div>
  <svg class="abs" style="left:200px;top:627px" width="5" height="8" viewBox="0 0 5 8" ><path d="M1 1l3 3-3 3" fill="none" stroke="#bbb" stroke-width=".9"/></svg>
  <div class="abs" style="left:751px;top:122px;width:14px;height:515px;background:#424242;"></div>
  <div class="abs" style="left:751px;top:122px;width:1px;height:515px;background:#333;"></div>
  <div class="abs" style="left:26px;top:229px;width:22px;height:18px;background:#2e2e2e;border-radius:2px"></div>
  <svg class="abs" style="left:6.5px;top:143px" width="12" height="12" viewBox="0 0 14 14" fill="none" stroke="#e4e4e4" stroke-width="1.200" stroke-linecap="round" stroke-linejoin="round"><path d="M7 1v12M1 7h12M7 1L5.300 2.800M7 1l1.700 1.800M7 13l-1.700-1.800M7 13l1.700-1.800M1 7l1.800-1.700M1 7l1.800 1.700M13 7l-1.800-1.700M13 7l-1.800 1.700"/></svg>
  <svg class="abs" style="left:19px;top:154px" width="2.5" height="2.5" viewBox="0 0 2.5 2.5" ><path d="M2.500 0v2.500H0z" fill="#cfcfcf"/></svg>
  <svg class="abs" style="left:30px;top:143px" width="12" height="12" viewBox="0 0 14 14" fill="none" stroke="#e4e4e4" stroke-width="1.200" stroke-linecap="round" stroke-linejoin="round"><rect x="1.500" y="2" width="11" height="10" stroke-dasharray="2.200 1.400"/></svg>
  <svg class="abs" style="left:42.5px;top:154px" width="2.5" height="2.5" viewBox="0 0 2.5 2.5" ><path d="M2.500 0v2.500H0z" fill="#cfcfcf"/></svg>
  <svg class="abs" style="left:6.5px;top:161px" width="12" height="12" viewBox="0 0 14 14" fill="none" stroke="#e4e4e4" stroke-width="1.200" stroke-linecap="round" stroke-linejoin="round"><path d="M1.500 2l5 3.500 5.500-3-3 6.500 2.500 3-6-2L2 12.500l2.500-5z"/></svg>
  <svg class="abs" style="left:19px;top:172px" width="2.5" height="2.5" viewBox="0 0 2.5 2.5" ><path d="M2.500 0v2.500H0z" fill="#cfcfcf"/></svg>
  <svg class="abs" style="left:30px;top:161px" width="12" height="12" viewBox="0 0 14 14" fill="none" stroke="#e4e4e4" stroke-width="1.200" stroke-linecap="round" stroke-linejoin="round"><path d="M2 12.500l6.500-7" stroke-width="2"/><path d="M10.500 1v2M10.500 5.500v1.500M8 4h1.500M12 4h1.500M8.800 2.300l.8.800M12.300 2.300l-.8.800"/></svg>
  <svg class="abs" style="left:42.5px;top:172px" width="2.5" height="2.5" viewBox="0 0 2.5 2.5" ><path d="M2.500 0v2.500H0z" fill="#cfcfcf"/></svg>
  <svg class="abs" style="left:6.5px;top:179px" width="12" height="12" viewBox="0 0 14 14" fill="none" stroke="#e4e4e4" stroke-width="1.200" stroke-linecap="round" stroke-linejoin="round"><path d="M3.500 1v9.500H13M1 3.500h9.500V13"/></svg>
  <svg class="abs" style="left:19px;top:190px" width="2.5" height="2.5" viewBox="0 0 2.5 2.5" ><path d="M2.500 0v2.500H0z" fill="#cfcfcf"/></svg>
  <svg class="abs" style="left:30px;top:179px" width="12" height="12" viewBox="0 0 14 14" fill="none" stroke="#e4e4e4" stroke-width="1.200" stroke-linecap="round" stroke-linejoin="round"><rect x="1.500" y="2" width="11" height="10"/><path d="M1.500 2l11 10M12.500 2l-11 10"/></svg>
  <svg class="abs" style="left:42.5px;top:190px" width="2.5" height="2.5" viewBox="0 0 2.5 2.5" ><path d="M2.500 0v2.500H0z" fill="#cfcfcf"/></svg>
  <svg class="abs" style="left:6.5px;top:196.5px" width="12" height="12" viewBox="0 0 14 14" fill="none" stroke="#e4e4e4" stroke-width="1.200" stroke-linecap="round" stroke-linejoin="round"><path d="M2 12l1-3 5.500-5.500 2 2L5 11z"/><path d="M8 3l1.500-1.500a1.400 1.400 0 0 1 2 0l1 1a1.400 1.400 0 0 1 0 2L11 6z" fill="#e4e4e4"/></svg>
  <svg class="abs" style="left:19px;top:207.5px" width="2.5" height="2.5" viewBox="0 0 2.5 2.5" ><path d="M2.500 0v2.500H0z" fill="#cfcfcf"/></svg>
  <svg class="abs" style="left:30px;top:196.5px" width="12" height="12" viewBox="0 0 14 14" fill="none" stroke="#e4e4e4" stroke-width="1.200" stroke-linecap="round" stroke-linejoin="round"><path d="M1.500 9.500l8-8 3 3-8 8z" fill="#e4e4e4"/><path d="M4.500 9.500l.01 0M7 7l.01 0M9.500 4.500l.01 0" stroke="#535353" stroke-width="1.300"/></svg>
  <svg class="abs" style="left:42.5px;top:207.5px" width="2.5" height="2.5" viewBox="0 0 2.5 2.5" ><path d="M2.500 0v2.500H0z" fill="#cfcfcf"/></svg>
  <svg class="abs" style="left:6.5px;top:214px" width="12" height="12" viewBox="0 0 14 14" fill="none" stroke="#e4e4e4" stroke-width="1.200" stroke-linecap="round" stroke-linejoin="round"><path d="M12.500 1.500L6 8" stroke-width="1.800"/><path d="M5.500 7.500c-2 .5-1.500 3-4 5 3 .3 5.500-1 6-3z" fill="#e4e4e4"/></svg>
  <svg class="abs" style="left:19px;top:225px" width="2.5" height="2.5" viewBox="0 0 2.5 2.5" ><path d="M2.500 0v2.500H0z" fill="#cfcfcf"/></svg>
  <svg class="abs" style="left:30px;top:214px" width="12" height="12" viewBox="0 0 14 14" fill="none" stroke="#e4e4e4" stroke-width="1.200" stroke-linecap="round" stroke-linejoin="round"><path d="M5 6.500a2.300 2.300 0 1 1 4 0c-.5 1-.5 1.500 0 2.500h2.500v2h-9V9H5c.5-1 .5-1.500 0-2.500z" fill="#e4e4e4"/><path d="M2 12.800h10"/></svg>
  <svg class="abs" style="left:42.5px;top:225px" width="2.5" height="2.5" viewBox="0 0 2.5 2.5" ><path d="M2.500 0v2.500H0z" fill="#cfcfcf"/></svg>
  <svg class="abs" style="left:6.5px;top:232px" width="12" height="12" viewBox="0 0 14 14" fill="none" stroke="#e4e4e4" stroke-width="1.200" stroke-linecap="round" stroke-linejoin="round"><path d="M12.500 1.500L7 7" stroke-width="1.700"/><path d="M6.500 6.500c-2 .5-1.500 3-4 5 3 .3 5-1 5.500-3z" fill="#e4e4e4"/><path d="M1 4.500c1.500-2.500 4-2.500 5-.5M6 4V2.300M6 4H4.300"/></svg>
  <svg class="abs" style="left:19px;top:243px" width="2.5" height="2.5" viewBox="0 0 2.5 2.5" ><path d="M2.500 0v2.500H0z" fill="#cfcfcf"/></svg>
  <svg class="abs" style="left:30px;top:232px" width="12" height="12" viewBox="0 0 14 14" fill="none" stroke="#e4e4e4" stroke-width="1.200" stroke-linecap="round" stroke-linejoin="round"><path d="M8 1.500l4.500 4-5.500 5.500H4L1.500 8.500z"/><path d="M8 1.500l4.500 4-3 3L5 4.500z" fill="#e4e4e4"/><path d="M3 12.500h9.500"/></svg>
  <svg class="abs" style="left:42.5px;top:243px" width="2.5" height="2.5" viewBox="0 0 2.5 2.5" ><path d="M2.500 0v2.500H0z" fill="#cfcfcf"/></svg>
  <svg class="abs" style="left:6.5px;top:250px" width="12" height="12" viewBox="0 0 14 14" fill="none" stroke="#e4e4e4" stroke-width="1.200" stroke-linecap="round" stroke-linejoin="round"><path d="M2 7l5.500-5.500 5 5L8 12.500H4.500z"/><path d="M2 7h10" /><path d="M4.500 3C3 1 1.500 1.500 1.500 3.500v3"/><path d="M12.800 9.500c.8 1.200.8 2.200 0 2.800-.8-.6-.8-1.600 0-2.800z" fill="#e4e4e4"/></svg>
  <svg class="abs" style="left:19px;top:261px" width="2.5" height="2.5" viewBox="0 0 2.5 2.5" ><path d="M2.500 0v2.500H0z" fill="#cfcfcf"/></svg>
  <svg class="abs" style="left:30px;top:250px" width="12" height="12" viewBox="0 0 14 14" fill="none" stroke="#e4e4e4" stroke-width="1.200" stroke-linecap="round" stroke-linejoin="round"><path d="M3 11.500C1 8 3.500 2 8 2c3 0 5 1.800 4.500 4.500C12 9 9 8 7.500 10.500c-1 1.500-3 2.500-4.500 1z" fill="#e4e4e4"/><path d="M2 13l3-4" stroke-width="1.400"/></svg>
  <svg class="abs" style="left:42.5px;top:261px" width="2.5" height="2.5" viewBox="0 0 2.5 2.5" ><path d="M2.500 0v2.500H0z" fill="#cfcfcf"/></svg>
  <svg class="abs" style="left:6.5px;top:268px" width="12" height="12" viewBox="0 0 14 14" fill="none" stroke="#e4e4e4" stroke-width="1.200" stroke-linecap="round" stroke-linejoin="round"><circle cx="8.500" cy="5" r="3.800" fill="#e4e4e4"/><path d="M6 8L1.500 12.500" stroke-width="1.800"/></svg>
  <svg class="abs" style="left:19px;top:279px" width="2.5" height="2.5" viewBox="0 0 2.5 2.5" ><path d="M2.500 0v2.500H0z" fill="#cfcfcf"/></svg>
  <svg class="abs" style="left:30px;top:268px" width="12" height="12" viewBox="0 0 14 14" fill="none" stroke="#e4e4e4" stroke-width="1.200" stroke-linecap="round" stroke-linejoin="round"><path d="M2 12.500l1.500-5L9 2l3.500 3.500L7 11z"/><circle cx="7.500" cy="7" r="1.200"/><path d="M2 12.500l4.500-4.500"/></svg>
  <svg class="abs" style="left:42.5px;top:279px" width="2.5" height="2.5" viewBox="0 0 2.5 2.5" ><path d="M2.500 0v2.500H0z" fill="#cfcfcf"/></svg>
  <svg class="abs" style="left:6.5px;top:285.5px" width="12" height="12" viewBox="0 0 14 14" fill="none" stroke="#e4e4e4" stroke-width="1.200" stroke-linecap="round" stroke-linejoin="round"><path d="M2 2.500h10V5M7 2.500v9.500M4.800 12h4.400M2 2.500V5" stroke-width="1.500"/></svg>
  <svg class="abs" style="left:19px;top:296.5px" width="2.5" height="2.5" viewBox="0 0 2.5 2.5" ><path d="M2.500 0v2.500H0z" fill="#cfcfcf"/></svg>
  <svg class="abs" style="left:30px;top:285.5px" width="12" height="12" viewBox="0 0 14 14" fill="none" stroke="#e4e4e4" stroke-width="1.200" stroke-linecap="round" stroke-linejoin="round"><rect x="1.500" y="2.500" width="11" height="9" fill="#7b7b7b"/></svg>
  <svg class="abs" style="left:42.5px;top:296.5px" width="2.5" height="2.5" viewBox="0 0 2.5 2.5" ><path d="M2.500 0v2.500H0z" fill="#cfcfcf"/></svg>
  <svg class="abs" style="left:6.5px;top:303px" width="12" height="12" viewBox="0 0 14 14" fill="none" stroke="#e4e4e4" stroke-width="1.200" stroke-linecap="round" stroke-linejoin="round"><path d="M4 12.500C2.500 10 1.500 8 1.800 7.200c.5-.8 1.500 0 2.200 1V3.500c0-1 1.500-1 1.500 0V2.300c0-1 1.500-1 1.500 0v1c0-1 1.500-1 1.500 0v1.200c0-1 1.500-1 1.500 0V9c0 1.500-.5 2.500-1 3.500z" fill="#e4e4e4" stroke-width=".6"/></svg>
  <svg class="abs" style="left:19px;top:314px" width="2.5" height="2.5" viewBox="0 0 2.5 2.5" ><path d="M2.500 0v2.500H0z" fill="#cfcfcf"/></svg>
  <svg class="abs" style="left:30px;top:303px" width="12" height="12" viewBox="0 0 14 14" fill="none" stroke="#e4e4e4" stroke-width="1.200" stroke-linecap="round" stroke-linejoin="round"><circle cx="5.800" cy="5.800" r="4.200"/><path d="M9 9l4 4" stroke-width="1.600"/></svg>
  <svg class="abs" style="left:6px;top:325px" width="14" height="4" viewBox="0 0 14 4" ><circle cx="2" cy="2" r="1.200" fill="#e4e4e4"/><circle cx="7" cy="2" r="1.200" fill="#e4e4e4"/><circle cx="12" cy="2" r="1.200" fill="#e4e4e4"/></svg>
  <svg class="abs" style="left:20px;top:332px" width="2.5" height="2.5" viewBox="0 0 2.5 2.5" ><path d="M2.500 0v2.500H0z" fill="#cfcfcf"/></svg>
  <div class="abs" style="left:22px;top:352px;width:17.5px;height:17.5px;background:#fdfdfd;border:1px solid #535353;box-sizing:content-box;margin:-1px"></div>
  <div class="abs" style="left:11px;top:341px;width:17.5px;height:17.5px;background:#fdfdfd;border:1px solid #535353;box-sizing:content-box;margin:-1px"></div>
  <svg class="abs" style="left:32px;top:340px" width="9" height="9" viewBox="0 0 9 9" ><path d="M1.500 2.500h4.500v4" fill="none" stroke="#ddd" stroke-width="1"/><path d="M3 .8L1.200 2.500 3 4.200M4.300 5l1.700 1.800L7.700 5" fill="none" stroke="#ddd" stroke-width=".9"/></svg>
  <svg class="abs" style="left:11px;top:363px" width="8" height="8" viewBox="0 0 8 8" ><rect x="2.500" y="2.500" width="5" height="5" fill="#eee" stroke="#333" stroke-width=".6"/><rect x=".5" y=".5" width="5" height="5" fill="#222" stroke="#ddd" stroke-width=".6"/></svg>
  <svg class="abs" style="left:6px;top:377px" width="14" height="11" viewBox="0 0 14 11" ><rect x=".6" y=".6" width="12.800" height="9.800" rx="1" fill="none" stroke="#dcdcdc" stroke-width="1.100"/><circle cx="7" cy="5.500" r="2.800" fill="none" stroke="#dcdcdc" stroke-dasharray="1 .8"/></svg>
  <svg class="abs" style="left:29px;top:377px" width="14" height="11" viewBox="0 0 14 11" ><rect x="3.600" y=".6" width="9.800" height="6.800" fill="none" stroke="#dcdcdc" stroke-width="1.100"/><rect x=".6" y="3.600" width="9.800" height="6.800" fill="#535353" stroke="#dcdcdc" stroke-width="1.100"/></svg>
  <svg class="abs" style="left:44px;top:387px" width="2.5" height="2.5" viewBox="0 0 2.5 2.5" ><path d="M2.500 0v2.500H0z" fill="#cfcfcf"/></svg>
  <div class="abs" style="left:765px;top:122px;width:83px;height:10px;background:#3f3f3f;"></div>
  <div class="pst" style="left:841px;top:119.5px;color:#bdbdbd;font-size:6px;">«</div>
  <div class="abs" style="left:763.5px;top:132px;width:86.5px;height:505px;background:#535353;"></div>
  <div class="abs" style="left:763.5px;top:132px;width:86.5px;height:27px;background:#535353;border-top:1px solid #666;border-bottom:1px solid #3d3d3d"></div>
  <div class="abs" style="left:763.5px;top:159px;width:86.5px;height:28px;background:#535353;border-top:1px solid #666;border-bottom:1px solid #3d3d3d"></div>
  <div class="abs" style="left:763.5px;top:187px;width:86.5px;height:28px;background:#535353;border-top:1px solid #666;border-bottom:1px solid #3d3d3d"></div>
  <div class="abs" style="left:763.5px;top:215px;width:86.5px;height:26px;background:#535353;border-top:1px solid #666;border-bottom:1px solid #3d3d3d"></div>
  <div class="abs" style="left:763.5px;top:241px;width:86.5px;height:3px;background:#454545;"></div>
  <div class="abs" style="left:763.5px;top:244px;width:86.5px;height:83px;background:#535353;border-top:1px solid #666;border-bottom:1px solid #3d3d3d"></div>
  <div class="abs" style="left:763.5px;top:327px;width:86.5px;height:1px;background:#3d3d3d;"></div>
  <svg class="abs" style="left:769px;top:139px" width="14" height="12" viewBox="0 0 14 12" ><path d="M.5 10V7l1.500-2 1 2 1-4.500 1.300 3L6.500 1l1.300 4.500 1-3 1.200 4.500 1-2 1.500 2v3z" fill="#e4e4e4"/><path d="M.5 11.500h13" stroke="#e4e4e4"/></svg>
  <div class="pst" style="left:789px;top:140.5px;color:#ededed;font-size:8px;">直方图</div>
  <svg class="abs" style="left:768px;top:166px" width="15" height="14" viewBox="0 0 15 14" ><path d="M1 1.500h1M1 3.500h1M1 5.500h1M3.500 1.500h1M3.500 3.500h1" stroke="#ddd"/><path d="M7.500 6a2.200 2.200 0 1 1 3.600 0c-.4.900-.4 1.400 0 2.300h2.400v2h-8.500v-2h2.500c.4-.9.400-1.400 0-2.300z" fill="#e4e4e4"/><path d="M5 12.500h9" stroke="#e4e4e4"/></svg>
  <div class="pst" style="left:789px;top:168px;color:#ededed;font-size:8px;">仿制源</div>
  <div class="pst" style="left:770px;top:193px;font-family:'Liberation Serif',serif;font-style:italic;font-weight:700;font-size:14px;line-height:14px;color:#e8e8e8">A</div>
  <div class="pst" style="left:789px;top:196px;color:#ededed;font-size:8px;">字形</div>
  <svg class="abs" style="left:769px;top:222px" width="14" height="15" viewBox="0 0 14 15" ><path d="M7 1l5.500 3v6.500L7 13.800 1.500 10.500V4z M1.500 4L7 7l5.500-3M7 7v6.800" fill="none" stroke="#e4e4e4" stroke-width="1.100" stroke-linecap="round" stroke-linejoin="round"/></svg>
  <div class="pst" style="left:789px;top:224.5px;color:#ededed;font-size:8px;">3D</div>
  <svg class="abs" style="left:768px;top:250px" width="15" height="14" viewBox="0 0 15 14" ><path d="M1 1.500h1M1 3.500h1M1 5.500h1M3.500 1.500h1M3.500 3.500h1" stroke="#ddd"/><path d="M13.500 1.500L8 7" stroke="#e4e4e4" stroke-width="1.800"/><path d="M7.500 6.500c-2 .5-1.500 3-4 5 3 .3 5-1 5.500-3z" fill="#e4e4e4"/></svg>
  <div class="pst" style="left:789px;top:252.5px;color:#ededed;font-size:8px;">画笔设置</div>
  <svg class="abs" style="left:769px;top:269px" width="14" height="14" viewBox="0 0 14 14" ><rect x="1" y="1" width="3" height="4" fill="none" stroke="#e4e4e4" stroke-width="1.100" stroke-linecap="round" stroke-linejoin="round"/><rect x="1" y="7" width="3" height="5" fill="#e4e4e4"/><path d="M7 2.500c4-1 6 2.500 3.500 5.500-1 1.200-2 2-3.500 2.500M7 .8v3.400h3" fill="none" stroke="#e4e4e4" stroke-width="1.100" stroke-linecap="round" stroke-linejoin="round"/></svg>
  <div class="pst" style="left:789px;top:271.5px;color:#ededed;font-size:8px;">历史记录</div>
  <div class="pst" style="left:769.5px;top:287.5px;font-size:13px;line-height:14px;color:#e8e8e8">A</div>
  <div class="abs" style="left:780px;top:288px;width:1px;height:14px;background:#cfcfcf;"></div>
  <div class="pst" style="left:789px;top:290.5px;color:#ededed;font-size:8px;">字符</div>
  <svg class="abs" style="left:768px;top:308px" width="15" height="13" viewBox="0 0 15 13" ><path d="M1 3h13M1 9.500h13" stroke="#e4e4e4" stroke-width="1.200"/><circle cx="4" cy="3" r="2" fill="#e4e4e4"/><path d="M13 6.500v6l-4-3z" fill="#e4e4e4"/></svg>
  <div class="pst" style="left:789px;top:309.5px;color:#ededed;font-size:8px;">画笔</div>
  <div class="abs" style="left:849.5px;top:122px;width:3.5px;height:515px;background:#3c3c3c;"></div>
  <div class="abs" style="left:853px;top:122px;width:194px;height:8px;background:#3f3f3f;"></div>
  <div class="pst" style="left:1037px;top:119.5px;color:#bdbdbd;font-size:6px;">»</div>
  <div class="abs" style="left:853px;top:130px;width:194px;height:507px;background:#535353;"></div>
  <div class="abs" style="left:853px;top:130px;width:194px;height:18px;background:#424242;"></div>
  <div class="abs" style="left:853px;top:130px;width:26px;height:19px;background:#535353;"></div>
  <div class="pst" style="left:858px;top:134.5px;color:#f4f4f4;font-size:8px;font-weight:700">颜色</div>
  <div class="pst" style="left:885px;top:134.5px;color:#9f9f9f;font-size:8px;">渐变</div>
  <div class="pst" style="left:912px;top:134.5px;color:#9f9f9f;font-size:8px;">色板</div>
  <div class="pst" style="left:939px;top:134.5px;color:#9f9f9f;font-size:8px;">图案</div>
  <div class="pst" style="left:966px;top:134.5px;color:#9f9f9f;font-size:8px;">段落</div>
  <div class="pst" style="left:994px;top:134.5px;color:#9f9f9f;font-size:8px;">注释</div>
  <svg class="abs" style="left:1038px;top:137px" width="7" height="5" viewBox="0 0 7 5" ><path d="M0 .5h7M0 2.500h7M0 4.500h7" stroke="#bdbdbd" stroke-width=".9"/></svg>
  <div class="abs" style="left:866px;top:163px;width:12.5px;height:12.5px;background:#fafafa;border:1px solid #535353;box-sizing:content-box;margin:-1px"></div>
  <div class="abs" style="left:859px;top:155.5px;width:13.5px;height:13.5px;background:#fafafa;border:1px solid #8c8c8c;box-sizing:content-box;margin:-1px;outline:1px solid #535353"></div>
  <div class="abs" style="left:883px;top:152px;width:129px;height:91px;background:linear-gradient(180deg,rgba(0,0,0,0),#000),linear-gradient(90deg,#fff,#f00);"></div>
  <svg class="abs" style="left:880px;top:149px" width="6" height="6" viewBox="0 0 6 6" ><circle cx="3" cy="3" r="2.300" fill="none" stroke="#fff" stroke-width="1"/></svg>
  <div class="abs" style="left:1023.5px;top:152px;width:13.5px;height:91px;background:linear-gradient(180deg,#f00 0%,#f0f 17%,#00f 33%,#0ff 50%,#0f0 67%,#ff0 83%,#f00 100%);"></div>
  <svg class="abs" style="left:1017px;top:239px" width="5" height="6" viewBox="0 0 5 6" ><path d="M.5.500l4 2.500-4 2.500z" fill="#fff"/></svg>
  <div class="abs" style="left:853px;top:257px;width:194px;height:2px;background:#3c3c3c;"></div>
  <div class="abs" style="left:853px;top:259px;width:194px;height:19px;background:#424242;"></div>
  <div class="abs" style="left:853px;top:259px;width:26px;height:20px;background:#535353;"></div>
  <div class="pst" style="left:858px;top:264px;color:#f4f4f4;font-size:8px;font-weight:700">属性</div>
  <div class="pst" style="left:885px;top:264px;color:#9f9f9f;font-size:8px;">调整</div>
  <div class="pst" style="left:912px;top:264px;color:#9f9f9f;font-size:8px;">库</div>
  <svg class="abs" style="left:1038px;top:266.5px" width="7" height="5" viewBox="0 0 7 5" ><path d="M0 .5h7M0 2.500h7M0 4.500h7" stroke="#bdbdbd" stroke-width=".9"/></svg>
  <svg class="abs" style="left:860px;top:284px" width="14" height="14" viewBox="0 0 14 14" ><rect x=".7" y=".7" width="12.600" height="12.600" rx="1.500" fill="#3b3b3b" stroke="#8b8b8b" stroke-width=".8"/><rect x="2.500" y="3" width="9" height="7.500" fill="none" stroke="#e8e8e8" stroke-width="1"/><path d="M2.500 5.500h9M5.500 3v2.500M8.500 3v2.500" stroke="#e8e8e8" stroke-width=".9"/><rect x="3" y="6" width="8" height="4" fill="#cfcfcf"/></svg>
  <svg class="abs" style="left:877.5px;top:285.5px" width="12" height="10" viewBox="0 0 12 10" ><rect width="12" height="10" rx="1" fill="#f0f0f0"/><circle cx="6" cy="5" r="2.800" fill="#333"/></svg>
  <div class="pst" style="left:895px;top:286.5px;color:#e6e6e6;font-size:8.5px;letter-spacing:.4px">色相/饱和度</div>
  <div class="abs" style="left:853px;top:301px;width:194px;height:1px;background:#434343;"></div>
  <div class="pst" style="left:858px;top:308px;color:#dcdcdc;font-size:8px;letter-spacing:.3px">预设:</div>
  <div class="abs" style="left:883px;top:307px;width:148.5px;height:12.5px;background:#454545;border-radius:1px"></div>
  <div class="pst" style="left:887px;top:308.5px;color:#ededed;font-size:8px;letter-spacing:.3px">默认值</div>
  <svg class="abs" style="left:1025px;top:312px" width="6" height="4" viewBox="0 0 6 4" ><path d="M.5.500L3 3 5.500.500" fill="none" stroke="#c9c9c9" stroke-width=".9"/></svg>
  <svg class="abs" style="left:861px;top:326px" width="11" height="13" viewBox="0 0 11 13" ><path d="M3.500 12C2.500 10 1.200 8.500 1.500 7.800c.5-.7 1.300 0 2 .8V4c0-.9 1.300-.9 1.300 0v3-1c0-.9 1.300-.9 1.300 0v1-.5c0-.9 1.300-.9 1.300 0V7.500 7c0-.9 1.300-.9 1.300 0v2.500c0 1-.3 1.700-.8 2.500z" fill="#e6e6e6"/><path d="M2.300 2.800L1.300 1.500M4.200 2V.5M6 2.800l1-1.300" stroke="#e6e6e6" stroke-width=".8"/></svg>
  <div class="abs" style="left:883px;top:326px;width:148.5px;height:13.5px;background:#454545;border-radius:1px"></div>
  <div class="pst" style="left:888px;top:328px;color:#ededed;font-size:8px;letter-spacing:.3px">全图</div>
  <svg class="abs" style="left:1025px;top:332px" width="6" height="4" viewBox="0 0 6 4" ><path d="M.5.500L3 3 5.500.500" fill="none" stroke="#c9c9c9" stroke-width=".9"/></svg>
  <div class="pst" style="left:857px;top:348px;color:#dcdcdc;font-size:8px;letter-spacing:.5px">色相:</div>
  <div class="abs" style="left:1002px;top:346px;width:29.5px;height:13.5px;background:#454545;"></div>
  <div class="pst" style="left:1005px;top:348px;color:#e6e6e6;font-size:8px;">0</div>
  <div class="abs" style="left:861px;top:363px;width:167px;height:2.5px;background:linear-gradient(90deg,#e03a3a 0%,#e8a01c 10%,#e8e020 20%,#3cd030 38%,#20d0b8 50%,#2040f0 62%,#8020f0 74%,#f020d8 86%,#f02060 100%);border-radius:1.500px"></div>
  <svg class="abs" style="left:940.5px;top:366px" width="7" height="6" viewBox="0 0 7 6" ><path d="M3.500 .3L6.700 5.700H.3z" fill="#f2f2f2"/></svg>
  <div class="pst" style="left:857px;top:377.5px;color:#dcdcdc;font-size:8px;letter-spacing:.5px">饱和度:</div>
  <div class="abs" style="left:1002px;top:375px;width:29.5px;height:13.5px;background:#454545;"></div>
  <div class="pst" style="left:1005px;top:377px;color:#e6e6e6;font-size:8px;">0</div>
  <div class="abs" style="left:861px;top:393px;width:167px;height:2.5px;background:linear-gradient(90deg,#8a8a8a 0%,#b06068 35%,#d83040 65%,#f01028 100%);border-radius:1.500px"></div>
  <svg class="abs" style="left:940.5px;top:396px" width="7" height="6" viewBox="0 0 7 6" ><path d="M3.500 .3L6.700 5.700H.3z" fill="#f2f2f2"/></svg>
  <div class="abs" style="left:1002px;top:404.5px;width:29.5px;height:3px;background:#454545;"></div>
  <div class="abs" style="left:1037px;top:306px;width:10px;height:102px;background:#4a4a4a;"></div>
  <div class="abs" style="left:1038.5px;top:315px;width:7px;height:43px;background:#636363;border-radius:1px"></div>
  <svg class="abs" style="left:1039.5px;top:308px" width="5" height="3.5" viewBox="0 0 5 3.5" ><path d="M.5 3L2.500.800 4.500 3" fill="none" stroke="#888" stroke-width=".8"/></svg>
  <svg class="abs" style="left:1039.5px;top:401px" width="5" height="3.5" viewBox="0 0 5 3.5" ><path d="M.5.500L2.500 2.700 4.500.500" fill="none" stroke="#888" stroke-width=".8"/></svg>
  <div class="abs" style="left:861px;top:409.5px;width:170px;height:1px;background:#484848;"></div>
  <svg class="abs" style="left:937px;top:413px" width="16" height="11" viewBox="0 0 16 11" ><rect x="6" y="1" width="9" height="8.500" fill="#e4e4e4"/><path d="M1 3.500h3.500M3 1.500l2 2-2 2" fill="none" stroke="#e4e4e4" stroke-width="1"/><path d="M2 6l2 3.500M4 6L2 9.500" stroke="#e4e4e4" stroke-width=".8"/></svg>
  <svg class="abs" style="left:957px;top:413px" width="16" height="11" viewBox="0 0 16 11" ><ellipse cx="5" cy="5" rx="3.500" ry="2.800" fill="none" stroke="#9d9d9d" stroke-width="1.200"/><path d="M9.500 2.300c3 0 4.500 1.500 4.500 3s-1 2.500-2.500 3M12.500 6.500l-1 2 2 .8" fill="none" stroke="#9d9d9d" stroke-width="1.100"/></svg>
  <svg class="abs" style="left:978px;top:412px" width="12" height="12" viewBox="0 0 12 12" ><path d="M3 5.500a4 4 0 1 1 4.500 5H2" fill="none" stroke="#9d9d9d" stroke-width="1.200"/><path d="M1 5l2 1.800L5 5" fill="none" stroke="#9d9d9d" stroke-width="1.100"/></svg>
  <div class="abs" style="left:995px;top:410px;width:19px;height:17px;background:#474747;"></div>
  <svg class="abs" style="left:998px;top:414px" width="13" height="9" viewBox="0 0 13 9" ><path d="M.5 4.500C2.500 1.500 4.500.500 6.500.500s4 1 6 4c-2 3-4 4-6 4s-4-1-6-4z" fill="#f4f4f4"/><circle cx="6.500" cy="4.500" r="2.300" fill="#474747"/><circle cx="6.500" cy="4.500" r="1" fill="#f4f4f4"/></svg>
  <svg class="abs" style="left:1019px;top:412px" width="10" height="12" viewBox="0 0 10 12" ><path d="M.5 2.500h9M3.500 2.500V1h3v1.500M1.500 2.500l.5 9h6l.5-9M3.800 4.500v5M6.200 4.500v5" fill="none" stroke="#dedede" stroke-width="1"/></svg>
  <div class="abs" style="left:853px;top:427.5px;width:194px;height:2px;background:#3c3c3c;"></div>
  <div class="abs" style="left:853px;top:429.5px;width:194px;height:18px;background:#424242;"></div>
  <div class="abs" style="left:853px;top:429.5px;width:26px;height:19px;background:#535353;"></div>
  <div class="pst" style="left:858px;top:434px;color:#f4f4f4;font-size:8px;font-weight:700">图层</div>
  <div class="pst" style="left:885px;top:434px;color:#9f9f9f;font-size:8px;">通道</div>
  <div class="pst" style="left:912px;top:434px;color:#9f9f9f;font-size:8px;">路径</div>
  <svg class="abs" style="left:1038px;top:436.5px" width="7" height="5" viewBox="0 0 7 5" ><path d="M0 .5h7M0 2.500h7M0 4.500h7" stroke="#bdbdbd" stroke-width=".9"/></svg>
  <div class="abs" style="left:855px;top:454.5px;width:57px;height:13px;background:#454545;border-radius:1px"></div>
  <svg class="abs" style="left:859px;top:457px" width="8" height="8" viewBox="0 0 8 8" ><circle cx="3.200" cy="3.200" r="2.400" fill="none" stroke="#e8e8e8" stroke-width="1.100"/><path d="M5 5l2.500 2.500" stroke="#e8e8e8" stroke-width="1.200"/></svg>
  <div class="pst" style="left:870px;top:456px;color:#e6e6e6;font-size:8px;">类型</div>
  <svg class="abs" style="left:904px;top:460px" width="6" height="4" viewBox="0 0 6 4" ><path d="M.5.500L3 3 5.500.500" fill="none" stroke="#c9c9c9" stroke-width=".9"/></svg>
  <svg class="abs" style="left:923.5px;top:456.5px" width="10" height="9" viewBox="0 0 10 9" ><rect x=".5" y=".5" width="9" height="7.500" rx="1" fill="none" stroke="#e2e2e2"/><path d="M1.500 7l2.500-3 2 2 1-1 1.500 2z" fill="#e2e2e2"/></svg>
  <svg class="abs" style="left:940.5px;top:456.5px" width="9" height="9" viewBox="0 0 9 9" ><circle cx="4.500" cy="4.500" r="3.800" fill="none" stroke="#e2e2e2"/><path d="M1.800 7.200A3.800 3.800 0 0 0 7.200 1.800z" fill="#e2e2e2"/></svg>
  <div class="pst" style="left:957.5px;top:455px;font-family:'Liberation Serif',serif;font-weight:700;font-size:11px;line-height:12px;color:#e6e6e6">T</div>
  <svg class="abs" style="left:973px;top:456.5px" width="10" height="9" viewBox="0 0 10 9" ><rect x="1.500" y="1.500" width="7" height="6" fill="none" stroke="#e2e2e2"/><rect x="0" y="0" width="2.500" height="2.500" fill="#e2e2e2"/><rect x="7.500" y="0" width="2.500" height="2.500" fill="#e2e2e2"/><rect x="0" y="6.500" width="2.500" height="2.500" fill="#e2e2e2"/><rect x="7.500" y="6.500" width="2.500" height="2.500" fill="#e2e2e2"/></svg>
  <svg class="abs" style="left:990px;top:456px" width="9" height="10" viewBox="0 0 9 10" ><path d="M1 4h4v5.500H1zM3.500 1.500H8v6.500H5" fill="none" stroke="#e2e2e2"/><rect x="1" y="5" width="4" height="4.500" fill="#e2e2e2"/></svg>
  <div class="abs" style="left:1010px;top:455px;width:6px;height:6px;background:#f2f2f2;border-radius:50%"></div>
  <div class="abs" style="left:1012px;top:460px;width:2px;height:6px;background:#444;"></div>
  <div class="abs" style="left:853px;top:470.5px;width:194px;height:1px;background:#494949;"></div>
  <div class="abs" style="left:855px;top:474px;width:78.5px;height:13.5px;background:#454545;border-radius:1px"></div>
  <div class="pst" style="left:860px;top:476px;color:#e6e6e6;font-size:8px;letter-spacing:.3px">正常</div>
  <svg class="abs" style="left:926px;top:480px" width="6" height="4" viewBox="0 0 6 4" ><path d="M.5.500L3 3 5.500.500" fill="none" stroke="#c9c9c9" stroke-width=".9"/></svg>
  <div class="pst" style="left:939px;top:475px;color:#dcdcdc;font-size:8px;letter-spacing:.2px">不透明度:</div>
  <div class="abs" style="left:978px;top:474px;width:26px;height:13.5px;background:#454545;"></div>
  <div class="pst" style="left:979.5px;top:475.5px;color:#ededed;font-size:7.6px;">100%</div>
  <div class="abs" style="left:1005px;top:474px;width:9.5px;height:13.5px;background:#4a4a4a;"></div>
  <svg class="abs" style="left:1007px;top:479.5px" width="6" height="4" viewBox="0 0 6 4" ><path d="M.5.500L3 3 5.500.500" fill="none" stroke="#c9c9c9" stroke-width=".9"/></svg>
  <div class="abs" style="left:853px;top:490px;width:194px;height:1px;background:#494949;"></div>
  <div class="pst" style="left:856px;top:495px;color:#dcdcdc;font-size:8px;letter-spacing:.4px">锁定:</div>
  <svg class="abs" style="left:881.5px;top:495.5px" width="9" height="9" viewBox="0 0 9 9" ><rect x=".5" y=".5" width="8" height="8" fill="none" stroke="#9a9a9a" stroke-width=".8"/><rect x="1" y="1" width="2.300" height="2.300" fill="#aaa"/><rect x="5.600" y="1" width="2.300" height="2.300" fill="#aaa"/><rect x="3.300" y="3.300" width="2.300" height="2.300" fill="#aaa"/><rect x="1" y="5.600" width="2.300" height="2.300" fill="#aaa"/><rect x="5.600" y="5.600" width="2.300" height="2.300" fill="#aaa"/></svg>
  <svg class="abs" style="left:896.5px;top:494.5px" width="9" height="11" viewBox="0 0 9 11" ><path d="M8 1L3.500 6.500" stroke="#a8a8a8" stroke-width="1.500"/><path d="M3.300 6.300C2 7 2.300 8.500.8 10c2 .2 3.300-.8 3.600-2.300z" fill="#a8a8a8"/></svg>
  <svg class="abs" style="left:910.5px;top:495px" width="10" height="10" viewBox="0 0 10 10" ><path d="M5 .5v9M.5 5h9M5 .5L3.700 2M5 .5L6.300 2M5 9.500L3.700 8M5 9.500L6.300 8M.5 5L2 3.700M.5 5L2 6.300M9.500 5L8 3.700M9.500 5L8 6.300" fill="none" stroke="#ededed" stroke-width="1"/></svg>
  <svg class="abs" style="left:925.5px;top:495px" width="11" height="10" viewBox="0 0 11 10" ><path d="M2 .5v7.500h8M.3 2.500h7.500V9.500" fill="none" stroke="#e2e2e2" stroke-width="1"/><path d="M6 1l4 4" stroke="#e2e2e2" stroke-width=".9"/></svg>
  <svg class="abs" style="left:942.5px;top:494px" width="8" height="11" viewBox="0 0 8 11" ><rect x=".5" y="4.500" width="7" height="6" rx=".8" fill="#ededed"/><path d="M2 4.500V3a2 2 0 0 1 4 0v1.500" fill="none" stroke="#ededed" stroke-width="1.100"/><circle cx="4" cy="7.300" r=".9" fill="#535353"/></svg>
  <div class="pst" style="left:955px;top:495px;color:#dcdcdc;font-size:8px;letter-spacing:.4px">填充:</div>
  <div class="abs" style="left:978px;top:493.5px;width:26px;height:13.5px;background:#454545;"></div>
  <div class="pst" style="left:979.5px;top:495px;color:#ededed;font-size:7.6px;">100%</div>
  <div class="abs" style="left:1005px;top:493.5px;width:9.5px;height:13.5px;background:#4a4a4a;"></div>
  <svg class="abs" style="left:1007px;top:499px" width="6" height="4" viewBox="0 0 6 4" ><path d="M.5.500L3 3 5.500.500" fill="none" stroke="#c9c9c9" stroke-width=".9"/></svg>
  <div class="abs" style="left:853px;top:509px;width:194px;height:108px;background:#4d4d4d;"></div>
  <div class="abs" style="left:876px;top:511px;width:20.5px;height:6px;background:#fff;background-image:linear-gradient(45deg,#ccc 25%,transparent 25%,transparent 75%,#ccc 75%),linear-gradient(45deg,#ccc 25%,transparent 25%,transparent 75%,#ccc 75%);background-size:3px 3px;background-position:0 0,1.500px 1.500px;background-color:#fff"></div>
  <div class="abs" style="left:905px;top:510.5px;width:7px;height:1px;background:#cfcfcf;"></div>
  <div class="abs" style="left:915px;top:510.5px;width:4px;height:1px;background:#8c8c8c;"></div>
  <div class="abs" style="left:853px;top:519.5px;width:184px;height:1px;background:#404040;"></div>
  <svg class="abs" style="left:856.5px;top:528.5px" width="11" height="8" viewBox="0 0 11 8" ><path d="M.5 4C2 1.500 3.700.500 5.500.500s3.500 1 5 3.500c-1.500 2.500-3.200 3.500-5 3.500S2 6.500.5 4z" fill="#f0f0f0"/><circle cx="5.500" cy="4" r="2" fill="#4d4d4d"/><circle cx="5.500" cy="4" r=".9" fill="#f0f0f0"/></svg>
  <div class="abs" style="left:873px;top:520px;width:1px;height:97px;background:#434343;"></div>
  <div class="abs" style="left:876px;top:524.5px;width:20.5px;height:16.5px;background:#fff;background-image:linear-gradient(45deg,#ccc 25%,transparent 25%,transparent 75%,#ccc 75%),linear-gradient(45deg,#ccc 25%,transparent 25%,transparent 75%,#ccc 75%);background-size:3px 3px;background-position:0 0,1.500px 1.500px;background-color:#fff;outline:.5px solid #777"></div>
  <div class="pst" style="left:904px;top:527.5px;color:#e6e6e6;font-size:8px;">树</div>
  <div class="abs" style="left:853px;top:544.5px;width:184px;height:1px;background:#404040;"></div>
  <div class="abs" style="left:873.5px;top:545px;width:163.5px;height:25.5px;background:#696969;"></div>
  <svg class="abs" style="left:856.5px;top:554px" width="11" height="8" viewBox="0 0 11 8" ><path d="M.5 4C2 1.500 3.700.500 5.500.500s3.500 1 5 3.500c-1.500 2.500-3.200 3.500-5 3.500S2 6.500.5 4z" fill="#f0f0f0"/><circle cx="5.500" cy="4" r="2" fill="#4d4d4d"/><circle cx="5.500" cy="4" r=".9" fill="#f0f0f0"/></svg>
  <svg class="abs" style="left:880px;top:552px" width="14" height="12" viewBox="0 0 14 12" ><rect x=".6" y=".6" width="12.800" height="10.800" rx="1" fill="none" stroke="#d6d6d6" stroke-width="1"/><path d="M.6 4h12.800M4.500 .6V4M8.500 .6V4" stroke="#d6d6d6" stroke-width=".9"/><rect x="2" y="5.500" width="10" height="4.500" fill="#c4c4c4"/></svg>
  <svg class="abs" style="left:898.5px;top:552.5px" width="6" height="11" viewBox="0 0 6 11" ><rect x="1" y=".7" width="4" height="4.600" rx="2" fill="none" stroke="#dedede" stroke-width="1"/><rect x="1" y="5.700" width="4" height="4.600" rx="2" fill="none" stroke="#dedede" stroke-width="1"/><path d="M3 3.500v4" stroke="#dedede"/></svg>
  <div class="abs" style="left:907px;top:548.5px;width:21px;height:18.5px;background:#fff;outline:1px solid #d8d8d8;outline-offset:1px"></div>
  <div class="abs" style="left:916px;top:548px;width:4px;height:1.5px;background:#696969;"></div>
  <div class="abs" style="left:916px;top:566.5px;width:4px;height:1.5px;background:#696969;"></div>
  <div class="abs" style="left:911px;top:554.5px;width:9px;height:9px;background:#0a0a0a;border-radius:50%"></div>
  <div class="pst" style="left:935px;top:553px;color:#f2f2f2;font-size:8.3px;letter-spacing:.45px">色相/饱和度 1</div>
  <div class="abs" style="left:853px;top:570.5px;width:184px;height:1px;background:#404040;"></div>
  <svg class="abs" style="left:856.5px;top:579.5px" width="11" height="8" viewBox="0 0 11 8" ><path d="M.5 4C2 1.500 3.700.500 5.500.500s3.500 1 5 3.500c-1.500 2.500-3.200 3.500-5 3.500S2 6.500.5 4z" fill="#f0f0f0"/><circle cx="5.500" cy="4" r="2" fill="#4d4d4d"/><circle cx="5.500" cy="4" r=".9" fill="#f0f0f0"/></svg>
  <svg class="abs" style="left:876px;top:575px" width="20.5" height="16.5" viewBox="0 0 20.500 16.500" ><rect width="20.500" height="16.500" fill="#6e4a1c"/><rect width="6" height="4" fill="#3ec8c8"/><rect x="6" width="3" height="4" fill="#e0482a"/><rect y="8" width="8.500" height="8.500" fill="#e2472a"/><rect x="6.500" y="4" width="14" height="3.500" fill="#e3b82a"/><rect x="8.500" y="8.500" width="4" height="8" fill="#49c6c4"/><rect x="12.500" y="11.500" width="8" height="5" fill="#e2c12d"/><rect x="11" y="7.500" width="7" height="2.500" fill="#e04a2c"/><rect x="13" y="1" width="6" height="1" fill="#e9c736"/></svg>
  <div class="pst" style="left:904px;top:578px;color:#e6e6e6;font-size:8px;letter-spacing:.4px">背景 拷贝</div>
  <div class="abs" style="left:853px;top:594.5px;width:184px;height:1px;background:#404040;"></div>
  <svg class="abs" style="left:856.5px;top:603px" width="11" height="8" viewBox="0 0 11 8" ><path d="M.5 4C2 1.500 3.700.500 5.500.500s3.500 1 5 3.500c-1.500 2.500-3.200 3.500-5 3.500S2 6.500.5 4z" fill="#f0f0f0"/><circle cx="5.500" cy="4" r="2" fill="#4d4d4d"/><circle cx="5.500" cy="4" r=".9" fill="#f0f0f0"/></svg>
  <svg class="abs" style="left:876px;top:599px" width="20.5" height="16.5" viewBox="0 0 20.500 16.500" ><rect width="20.500" height="16.500" fill="#6e4a1c"/><rect width="6" height="4" fill="#3ec8c8"/><rect x="6" width="3" height="4" fill="#e0482a"/><rect y="8" width="8.500" height="8.500" fill="#e2472a"/><rect x="6.500" y="4" width="14" height="3.500" fill="#e3b82a"/><rect x="8.500" y="8.500" width="4" height="8" fill="#49c6c4"/><rect x="12.500" y="11.500" width="8" height="5" fill="#e2c12d"/><rect x="11" y="7.500" width="7" height="2.500" fill="#e04a2c"/><rect x="13" y="1" width="6" height="1" fill="#e9c736"/></svg>
  <div class="pst" style="left:904px;top:601.5px;color:#e6e6e6;font-size:8px;letter-spacing:.4px">背景</div>
  <svg class="abs" style="left:1018.5px;top:602px" width="8" height="10" viewBox="0 0 8 10" ><rect x=".6" y="4" width="6.800" height="5.400" rx=".8" fill="none" stroke="#e2e2e2" stroke-width="1"/><path d="M2 4V2.800a2 2 0 0 1 4 0V4" fill="none" stroke="#e2e2e2" stroke-width="1"/><circle cx="4" cy="6.700" r=".8" fill="#e2e2e2"/></svg>
  <div class="abs" style="left:1037px;top:509px;width:10px;height:108px;background:#4a4a4a;"></div>
  <div class="abs" style="left:1038.5px;top:584px;width:7px;height:16px;background:#636363;"></div>
  <svg class="abs" style="left:1039.5px;top:513px" width="5" height="3.5" viewBox="0 0 5 3.5" ><path d="M.5 3L2.500.800 4.500 3" fill="none" stroke="#888" stroke-width=".8"/></svg>
  <svg class="abs" style="left:1039.5px;top:610px" width="5" height="3.5" viewBox="0 0 5 3.5" ><path d="M.5.500L2.500 2.700 4.500.500" fill="none" stroke="#888" stroke-width=".8"/></svg>
  <svg class="abs" style="left:1033.5px;top:570.5px" width="13" height="12" viewBox="0 0 13 12" ><rect width="13" height="12" rx="2" fill="#16161a"/><rect x="2" y="2" width="9" height="8" rx="2.500" fill="none" stroke="#e8e8f8" stroke-width="1.200"/><path d="M4 6h5" stroke="#e8e8f8" stroke-width="1.300"/></svg>
  <svg class="abs" style="left:1031.5px;top:567px" width="4" height="4" viewBox="0 0 4 4" ><path d="M4 0v4H0z" fill="#9a9a9a"/></svg>
  <div class="abs" style="left:853px;top:617px;width:194px;height:20px;background:#535353;"></div>
  <div class="abs" style="left:853px;top:617px;width:194px;height:1px;background:#434343;"></div>
  <svg class="abs" style="left:908.5px;top:623px" width="11" height="8" viewBox="0 0 11 8" ><rect x=".5" y="2" width="5.500" height="4" rx="2" fill="none" stroke="#8a8a8a" stroke-width="1"/><rect x="5" y="2" width="5.500" height="4" rx="2" fill="none" stroke="#8a8a8a" stroke-width="1"/></svg>
  <div class="pst" style="left:927.5px;top:620px;font-family:'Liberation Serif',serif;font-style:italic;font-size:11.500px;line-height:12px;color:#ececec">fx</div>
  <svg class="abs" style="left:937px;top:631.5px" width="2.5" height="2.5" viewBox="0 0 2.5 2.5" ><path d="M2.500 0v2.500H0z" fill="#cfcfcf"/></svg>
  <svg class="abs" style="left:944.5px;top:622.5px" width="12" height="9" viewBox="0 0 12 9" ><rect width="12" height="9" rx="1" fill="#ececec"/><circle cx="6" cy="4.500" r="2.600" fill="#3c3c3c"/></svg>
  <svg class="abs" style="left:964px;top:622px" width="10" height="10" viewBox="0 0 10 10" ><circle cx="5" cy="5" r="4.200" fill="none" stroke="#ececec" stroke-width="1.100"/><path d="M2 8A4.200 4.200 0 0 0 8 2z" fill="#ececec"/></svg>
  <svg class="abs" style="left:974px;top:631.5px" width="2.5" height="2.5" viewBox="0 0 2.5 2.5" ><path d="M2.500 0v2.500H0z" fill="#cfcfcf"/></svg>
  <svg class="abs" style="left:981.5px;top:622.5px" width="12" height="9" viewBox="0 0 12 9" ><path d="M.5 1.500h4l1 1.500h6v6H.5z" fill="#ececec"/></svg>
  <svg class="abs" style="left:1001px;top:622px" width="10" height="10" viewBox="0 0 10 10" ><rect x=".6" y=".6" width="8.800" height="8.800" rx="1" fill="none" stroke="#ececec" stroke-width="1.100"/><path d="M5 2.800v4.400M2.800 5h4.400" stroke="#ececec" stroke-width="1.100"/></svg>
  <svg class="abs" style="left:1019px;top:621px" width="10" height="12" viewBox="0 0 10 12" ><path d="M.5 2.500h9M3.500 2.500V1h3v1.500M1.500 2.500l.5 9h6l.5-9M3.800 4.500v5M6.200 4.500v5" fill="none" stroke="#dedede" stroke-width="1"/></svg>
  <!-- ===== illustration (abs 603,279 466x350) ===== -->
  <svg class="abs" style="left:173px;top:213px" width="466" height="350" viewBox="603 279 466 350">
    <defs>
      <clipPath id="cpB"><rect x="603" y="369" width="142" height="78"/></clipPath>
      <clipPath id="cpR"><rect x="876" y="449" width="112" height="77"/></clipPath>
      <clipPath id="cpBowl"><ellipse cx="923" cy="590" rx="35" ry="30"/></clipPath>
      <pattern id="spk" width="3" height="3" patternUnits="userSpaceOnUse"><rect width="3" height="3" fill="#e2452c"/><rect width="1" height="1" fill="#f6d6c8"/><rect x="2" y="1.500" width="1" height="1" fill="#f2c0b0"/></pattern>
      <filter id="grain" x="0" y="0" width="100%" height="100%"><feTurbulence type="fractalNoise" baseFrequency=".9 .25" numOctaves="2" seed="3" result="n"/><feColorMatrix in="n" type="matrix" values="0 0 0 0 0  0 0 0 0 0  0 0 0 0 0  .9 .9 .9 0 -1.050" /></filter>
    </defs>
    <!-- background blocks -->
    <rect x="603" y="279" width="466" height="350" fill="#6b4b1d"/>
    <rect x="603" y="279" width="142" height="90" fill="#3fc8d5"/>
    <rect x="745" y="279" width="68.500" height="90" fill="#e5502e"/>
    <rect x="813.500" y="279" width="255.500" height="90" fill="#6a4a1d"/>
    <rect x="603" y="369" width="142" height="78.500" fill="#6c4d1c"/>
    <circle cx="740" cy="376" r="96" fill="#5d4115" clip-path="url(#cpB)"/>
    <rect x="745" y="369" width="324" height="79" fill="#e0b920"/>
    <rect x="603" y="447.500" width="191" height="181.500" fill="#e8512e"/>
    <rect x="793.500" y="448" width="82" height="181" fill="#40c8d4"/>
    <rect x="875.500" y="538" width="193.500" height="91" fill="#e5c128"/>
    <rect x="1003" y="448" width="66" height="91.500" fill="#6a4b1c"/>

    <!-- === top-left: apples, bowl, plant === -->
    <path d="M615 353h58c-2 10-14 16-29 16s-27-6-29-16z" fill="#e9c92c"/>
    <path d="M620 356h10v4h8v-3h12v4h9v-4h10c-3 7-12 11-25 11s-21-4-24-11z" fill="#f2da4a" opacity=".8"/>
    <circle cx="634" cy="344.500" r="10" fill="#dd3b26"/><path d="M624.300 347l5-3.500 5 3 5.500-3.500 4 3a10 10 0 0 1-19.500 1z" fill="#6d2f1a"/>
    <circle cx="655.500" cy="344.500" r="10" fill="#dd3b26"/><path d="M645.800 346l5-3 5 3.500 5-3.500 4.500 3.500a10 10 0 0 1-8 8l2 4-5-1.500-3-2.500a10 10 0 0 1-6.500-8.500z" fill="#5f2a18"/>
    <circle cx="644.500" cy="329" r="10.300" fill="#e2422a"/><path d="M645 320c.5-3 1.500-5 4-6" stroke="#e07a5a" stroke-width="1.500" fill="none"/>
    <!-- stem line -->
    <rect x="709.800" y="312" width="3" height="76" fill="#c9f1f5"/>
    <!-- feather -->
    <g transform="rotate(-52 732 297)"><ellipse cx="732" cy="297" rx="21" ry="7" fill="#f3f1ee"/><path d="M712 297h40" stroke="#bfc4c8" stroke-width=".8"/><path d="M722 292l5 5-5 4z M736 291l6 6h-7z" fill="#cfd2d6"/><path d="M745 293l5 3-5 1z" fill="#e2452c"/></g>
    <!-- red flower -->
    <path d="M707 303c-2-7 1-12 5-12s5 4 4 8l6-5c3 2 1 8-2 11l5-3c1 4-3 9-8 10l-6 2c-4-2-5-6-4-11z" fill="#dc3e29"/>
    <path d="M707 306l4-2 3 3 4-3 3 3 3-2-2 6-7 3-6-1z" fill="#f3efe9"/><path d="M708 310l4-1.500 3 2 4-2 3 2-3 4-6 1z" fill="#e5553c"/>
    <path d="M722 309l6-2v8l-5 2z" fill="#e2452c"/>
    <!-- spiky leaves -->
    <path d="M710 318l-23-14 19 18z M708 320l-24-1 23 5z M707 324l-14 12 17-9z" fill="#d6452e"/>
    <g transform="rotate(-38 701 331)"><ellipse cx="701" cy="331" rx="12" ry="4.500" fill="#f2f0ec"/><path d="M690 330.500c6-2 14-2 22 0" stroke="#dc4a30" stroke-width="1.600" fill="none"/></g>
    <!-- cherry -->
    <path d="M721 313l1 7" stroke="#c23a28" stroke-width="1"/><circle cx="722" cy="325.500" r="5.600" fill="#dc3b28"/>
    <!-- brown oval -->
    <ellipse cx="733.500" cy="345.500" rx="8" ry="11.500" fill="#c9c43a"/><ellipse cx="731" cy="345.500" rx="6.300" ry="10" fill="#5a4a22"/><rect x="740" y="343" width="5" height="5" fill="#d8c63a"/>

    <!-- === top-middle red block: kettle === -->
    <rect x="745" y="342.800" width="26" height="6.200" fill="#4fc3cc"/>
    <circle cx="776" cy="320" r="17.500" fill="none" stroke="#4fc3cc" stroke-width="5.500"/>
    <g transform="rotate(38 770 325)"><rect x="752" y="310.500" width="36" height="29" fill="#6a4a1c" stroke="#f0a024" stroke-width="2.200"/></g>
    <g transform="rotate(38 753 306)"><rect x="748.500" y="301.500" width="9" height="9" fill="#59bfc6"/></g>
    <g transform="rotate(-40 782 305)"><rect x="775" y="300" width="12" height="9" fill="#f6d8d8"/><rect x="786" y="301" width="8" height="7" fill="#f4efe9"/></g>
    <path d="M789 298l9-9.500h15.500" fill="none" stroke="#e9b82c" stroke-width="7"/>
    <g fill="#4fc3cc"><path id="hrt" d="M757.800 368.500c-6-3.500-10-7-10-11a4.600 4.600 0 0 1 10-2 4.600 4.600 0 0 1 10 2c0 4-4 7.500-10 11z"/><use href="#hrt" x="22"/><use href="#hrt" x="44"/></g>

    <!-- === shelves === -->
    <rect x="822" y="313" width="4" height="56" fill="#e3231c"/><rect x="826" y="313" width="2.200" height="56" fill="#f6f1e6"/>
    <rect x="817" y="306" width="80.500" height="7" fill="#e8c22f"/><rect x="886" y="306" width="8" height="7" fill="#f0d050"/>
    <rect x="817" y="345" width="252" height="8" fill="#e8c22f"/>
    <rect x="834.500" y="289" width="3.600" height="17" fill="#f4efe6"/><rect x="843.500" y="289" width="2" height="17" fill="#f4efe6"/><rect x="845.500" y="292" width="2" height="14" fill="#3ec2c8"/>
    <g id="cup"><path d="M860.500 332.500h17v5a7 7 0 0 1-7 7h-3a7 7 0 0 1-7-7z" fill="#3cc4d0" stroke="#f4efe2" stroke-width="1.300"/><path d="M860.500 334.500c-3-.5-3 5 .5 5.500" fill="none" stroke="#f4efe2" stroke-width="1.200"/><path d="M861 333.300h16" stroke="#d9803a" stroke-width="1"/><path d="M865 330c2.500-2.500-2.500-5.500 0-8s-1.500-5 0-7M869 330c2.500-2.500-2.500-5.500 0-8s-1.500-5 0-7M873 330c2.500-2.500-2.500-5.500 0-8s-1.500-5 0-7" fill="none" stroke="#efe6d0" stroke-width=".9"/></g>
    <use href="#cup" x="26.500"/>
    <!-- clock -->
    <rect x="919" y="338" width="70" height="7" fill="#d8402a"/><rect x="924" y="340" width="52" height="4" fill="#6a3a1a"/>
    <rect x="921" y="299.500" width="64" height="38.500" fill="#f2f0ea"/>
    <rect x="921" y="299.500" width="61.500" height="38.500" fill="#3fd0dc"/>
    <rect x="923.800" y="302.500" width="56" height="32.500" fill="#2b1b08"/>
    <rect x="925.500" y="304.500" width="53" height="28" fill="#ebc932"/><rect x="966" y="304.500" width="8" height="28" fill="#f6e66a" opacity=".8"/>
    <text x="953.500" y="319" font-size="6.500" font-weight="700" font-family="Liberation Serif,serif" text-anchor="middle" fill="#3a2a10" letter-spacing=".4">11:22</text>
    <rect x="934" y="321" width="37" height=".6" fill="#6a5a20"/>
    <!-- books -->
    <path d="M1001.500 342.500L1017 298l6.500 2.500L1008 345z" fill="#3fd0dc"/>
    <rect x="1024" y="290" width="6.500" height="55" fill="#ecc62e"/><rect x="1030" y="290" width="2.200" height="55" fill="#f8f4ea"/>
    <rect x="1033.500" y="289" width="6" height="56" fill="#e5231c"/><rect x="1039.500" y="290" width="2.500" height="55" fill="#f8f4ea"/>
    <rect x="1043.500" y="297" width="6" height="48" fill="#ecc62e"/><rect x="1049.500" y="297" width="2" height="48" fill="#f8f4ea"/>
    <rect x="1053" y="297" width="6.500" height="48" fill="#30d0dc"/>
    <rect x="1060.500" y="289" width="6.500" height="56" fill="#e5231c"/><rect x="1067" y="290" width="2" height="55" fill="#f8f4ea"/>

    <!-- === bulb === -->
    <rect x="632.800" y="394.300" width="19.400" height="26" fill="url(#spk)"/><rect x="639" y="401" width="7.500" height="13.500" fill="#f4ece2"/><rect x="640" y="406.500" width="5.500" height="1.300" fill="#6a4a2a"/>
    <g fill="#ecd84a"><rect x="676" y="391.500" width="9" height="4.500" rx="2.200" transform="rotate(20 680 394)"/><rect x="680.500" y="382.500" width="9" height="4.500" rx="2.200" transform="rotate(35 685 385)"/><rect x="689" y="375" width="9" height="4.500" rx="2.200" transform="rotate(58 693 377)"/><rect x="698.500" y="371" width="9" height="4.500" rx="2.200" transform="rotate(78 703 373.500)"/><rect x="716.500" y="371.500" width="9" height="4.500" rx="2.200" transform="rotate(-72 721 374)"/><rect x="725.500" y="377.500" width="9" height="4.500" rx="2.200" transform="rotate(-50 730 379.600)"/><rect x="731.500" y="384.500" width="9" height="4.500" rx="2.200" transform="rotate(-22 736 386.700)"/></g>
    <path d="M710.300 377a23.400 23.400 0 0 1 16 40.500c-3 3-3.800 6-3.800 10v7h-24.400v-7c0-4-.8-7-3.800-10a23.400 23.400 0 0 1 16-40.500z" fill="#f4f1ee"/>
    <rect x="709.800" y="369" width="3" height="19" fill="#7fdbe4"/>
    <path d="M696 391.500c8-5 21-5 29 0M701 393.500c6-3 13-3 19 0" fill="none" stroke="#d9452e" stroke-width="1.500" stroke-dasharray="1.500 .6"/>
    <path d="M705.500 414v-7a4.800 4.800 0 0 1 9.600 0v7h2v1.800h-13.600V414z" fill="#4cc8d4"/>
    <path d="M706.500 416v17M714 416v17" stroke="#3a3a3a" stroke-width="1.300" stroke-dasharray="1.200 .5"/>
    <rect x="697" y="434" width="26" height="14.500" fill="url(#spk)"/>

    <!-- === city === -->
    <rect x="755.700" y="398" width="32" height="30.500" fill="#f7f5ef"/>
    <g><rect x="761" y="404" width="2.300" height="9.500" fill="#3a2a1a"/><rect x="765.300" y="404" width="2.300" height="9.500" fill="#d9452e"/><rect x="769.300" y="404" width="2.300" height="9.500" fill="#8a7a72"/><rect x="765.300" y="415.500" width="2.300" height="9" fill="#3a2a1a"/><rect x="769.300" y="415.500" width="2.300" height="9" fill="#e6a8a0"/></g>
    <path d="M787.500 428.500v-41.500h17v-6.500h26v48z" fill="#3fcbd8" stroke="#f4f6f2" stroke-width="1.100"/>
    <path d="M794 399v29M787.500 399h29v-18M816.500 423h13.500M816.500 423v5.500" fill="none" stroke="#f4f6f2" stroke-width="1.100"/>
    <rect x="791" y="405.800" width="11" height="3" fill="#c0402c"/><rect x="796" y="405.800" width="6" height="3" fill="#3a2a1a"/>
    <rect x="813.500" y="388" width="3" height="9.500" fill="#3a2a1a"/><rect x="819" y="389.500" width="3" height="6" fill="#3a3a20"/><rect x="814" y="392" width="2" height="2.500" fill="#d9452e"/>
    <path d="M814 412l3.500-1.500v5z" fill="#2a6a80"/>
    <rect x="829" y="371.600" width="24" height="57" fill="#f7f5ef"/>
    <g><circle cx="843" cy="376.300" r="2.300" fill="#3e2c16"/><circle cx="848.300" cy="376.300" r="2.300" fill="#de4a34"/><circle cx="843" cy="382.300" r="2.300" fill="#de4a34"/><circle cx="848.300" cy="382.300" r="2.300" fill="#3e2c16"/><circle cx="843" cy="388.300" r="2.300" fill="#3e2c16"/><circle cx="848.300" cy="388.300" r="2.300" fill="#3e2c16"/><circle cx="843" cy="394.300" r="2.300" fill="#3e2c16"/><circle cx="848.300" cy="394.300" r="2.300" fill="#e2562e"/></g>
    <rect x="829" y="402.800" width="24" height="3.300" fill="#e05032"/><rect x="840.300" y="402.800" width=".9" height="3.300" fill="#f7f5ef"/>
    <rect x="832" y="418" width="6" height="3.500" fill="#5a4a2a"/><rect x="833.500" y="422.500" width="5.500" height="6" fill="#6a4a1c"/>
    <rect x="853" y="384" width="22.500" height="44.500" fill="#6a4a1c"/>
    <rect x="856" y="389" width="6.500" height="13" fill="#f7f5ef"/><rect x="866.500" y="389" width="6" height="13" fill="#e05032"/><rect x="856" y="403.500" width="6.500" height="13" fill="#e05032"/><rect x="865" y="403.500" width="6.500" height="12" fill="#f7f5ef"/><rect x="864" y="384" width="1.300" height="44.500" fill="#f7f5ef"/><rect x="853" y="421.500" width="22.500" height="1.300" fill="#f7f5ef"/><rect x="853" y="398" width="10" height="1" fill="#f7f5ef"/>
    <rect x="875.500" y="392.500" width="14" height="36" fill="#f7f5ef"/><rect x="878.500" y="394.500" width="3" height="3.500" fill="#d9452e"/><rect x="883.500" y="394.500" width="3" height="3.500" fill="#2a1a10"/>
    <!-- cathedral -->
    <path d="M888 428.500v-31l4-1 23-26.500 23 26.500 7 4v28z" fill="#f7f5ef"/>
    <g stroke="#4cc8e0" stroke-width="1.600"><path d="M891 397v31.500M896.500 388v40.500M907 374v54.500M925 374v54.500M935 380v48.500M944 385v43.500M901.500 385v43"/></g>
    <g stroke="#f4f6f2" stroke-width="1"><path d="M886 382v14M894.500 376v16M907 370v8M923.500 371v8M934 377v10M943 380v10"/></g>
    <g fill="#4a3520"><path d="M913.500 397.500v-12a2.600 2.600 0 0 1 5.200 0v12zM900.700 396v-7a2 2 0 0 1 4 0v7zM928.500 398v-6.500a1.800 1.800 0 0 1 3.600 0v6.500zM913.800 411v-5.500a2.300 2.300 0 0 1 4.600 0v5.500zM900.300 411v-5a1.800 1.800 0 0 1 3.600 0v5zM928.300 411v-4.500a1.800 1.800 0 0 1 3.600 0v4.500zM913.800 428v-7.500a2.500 2.500 0 0 1 5 0v7.500zM929 428v-6h3v6zM899.500 428v-4h3v4zM889.500 428v-4h3v4zM938.500 428v-5.500h3v5.500z"/><rect x="890" y="398" width="2.500" height="5"/><rect x="890" y="408" width="2.500" height="2.300"/><rect x="890" y="413.500" width="2.500" height="2.300"/><rect x="890" y="419" width="2.500" height="1.800"/><rect x="900.500" y="414" width="3" height="2"/><rect x="900.500" y="419" width="3" height="1.600"/><rect x="928.500" y="414" width="3" height="2"/><rect x="939" y="398.500" width="2.500" height="5"/><rect x="939" y="409" width="2.500" height="2.300"/><rect x="939" y="414.500" width="2.500" height="2.300"/></g>
    <rect x="946" y="399" width="19" height="29.500" fill="#5a4220"/><rect x="961.500" y="397.500" width="3.500" height="31" fill="#4a3a1c"/><g fill="#e04a34"><rect x="948.500" y="404.500" width="2.500" height="3.500"/><rect x="952.800" y="404.500" width="2.500" height="3.500"/><rect x="957" y="404.500" width="2.500" height="3.500"/><rect x="961.800" y="403.500" width="1.800" height="3.500"/></g>
    <path d="M948.500 428.500v-9a1.500 1.500 0 0 1 3 0v9zM953.500 428.500v-9a1.500 1.500 0 0 1 3 0v9zM958.500 428.500v-9a1.500 1.500 0 0 1 3 0v9z" fill="#f7f5ef"/>
    <rect x="963.800" y="382" width="13" height="46.500" fill="#f7f5ef"/><g fill="#5a3030"><rect x="967" y="386.500" width="1.800" height="6"/><rect x="970" y="386.500" width="1.800" height="6" fill="#c04a4a"/><rect x="973" y="386.500" width="1.800" height="6"/><rect x="967" y="394.500" width="1.800" height="5" fill="#c04a4a"/><rect x="970" y="394.500" width="1.800" height="5"/><rect x="970" y="401.500" width="1.800" height="5" fill="#c04a4a"/><rect x="973" y="401.500" width="1.800" height="5"/></g>
    <rect x="977" y="376" width="11.500" height="52.500" fill="#3fc6d4"/><rect x="986.500" y="376" width="2" height="40" fill="#bfeef2"/><g fill="#4a3a2a"><rect x="981" y="381" width="2.500" height="4.500"/><rect x="984.500" y="381" width="2" height="4.500" fill="#c8483a"/><rect x="981" y="388" width="2.500" height="4.500" fill="#c8483a"/><rect x="984.500" y="388" width="2" height="4.500"/></g><path d="M977 414c4 1.500 8-.5 11.500 1" stroke="#d8503a" stroke-width="1.200" fill="none"/><rect x="979" y="421.500" width="7" height="1.500" fill="#e8f8f8"/>
    <!-- orange trees + white hill -->
    <path d="M989 447.500v-31.500h41a14 14 0 0 1 14 14v17.500z" fill="#f8f6f0"/>
    <rect x="1002" y="408" width="2.200" height="8.500" fill="#5a3a1a"/><rect x="1018" y="408" width="2.200" height="8.500" fill="#5a3a1a"/>
    <circle cx="1003" cy="403.800" r="6.600" fill="#ea5a26"/><circle cx="1019" cy="403.800" r="6.600" fill="#ea5a26"/>

    <!-- === road === -->
    <path d="M745 447.500V437l12.500-8.500H989a14.500 14.500 0 0 1 14.500 14.500v95H875.500v-12.500H987V449.300H794v-1.800z" fill="#e5502e"/>
    <rect x="876" y="449.300" width="111.500" height="76" fill="#6a4b1b"/>
    <ellipse cx="948" cy="538" rx="72" ry="31" fill="#dfbd26" clip-path="url(#cpR)"/>
    <path d="M759.800 448v-6h228" fill="none" stroke="#fbf2e6" stroke-width="1.900" stroke-dasharray="9.500 4.600"/>
    <path d="M989.300 446v78" fill="none" stroke="#f6b8b0" stroke-width="2.600" stroke-dasharray="8 4.500"/>
    <path d="M882 531.500h105" fill="none" stroke="#f49a8e" stroke-width="2.400" stroke-dasharray="9 5"/>
    <!-- pond + ribbons -->
    <path d="M876 537.500h124v4.500c-2 7-10 11.500-20 11.500h-88c-9 0-15-5-16-14.500z" fill="#40c8d4"/>
    <path d="M958 550c14-1 26-7 37-15l5 7c-11 9-24 16-39 17z" fill="#e44a2a"/>
    <path d="M978 538.500c10-2 19-8 27-16.500l6 8c-8 6-14 10-22 11.500z" fill="#40c8d4"/>
    <path d="M990 553c5-2 9-6 12-11l-7-2c-3 6-8 9-14 13z" fill="#40c8d4" opacity=".9"/>
    <!-- trees in road -->
    <rect x="947.800" y="493" width="7" height="17.500" fill="#f2e4dc"/><rect x="973" y="493" width="7" height="17.500" fill="#f2e4dc"/>
    <circle cx="951.300" cy="484.600" r="11" fill="#3fc4d2"/><circle cx="976.600" cy="484.600" r="11" fill="#3fc4d2"/>
    <!-- runner -->
    <path d="M916 489h18l3 9 8 16 13 8-2 3.500-17-8.500-8-14-13 .5-4 21h-5l1.500-27z" fill="#77705f"/>
    <path d="M906 514l7 1-1 3.500c-3 2-6 2.500-8 1z M957 520l5 3-1 7-4-1.500z" fill="#38c0cc"/>
    <path d="M914.500 457h12l8.500 31h-19z" fill="#e4472b"/>
    <path d="M916 459l-11.500 13-10.500-7-1.500 2.500 12.500 9.500 14-13z" fill="#f6f2e8"/><path d="M913 459.500l6-3 2.500 6-6 4z" fill="#38c0cc"/>
    <path d="M927.500 461l8 2.500 6.500 8.500-2 1.500-6.500-7-6-1.500z" fill="#f6f2e8"/>
    <rect x="917.500" y="450" width="7.500" height="4" fill="#38c0cc"/>
    <ellipse cx="920" cy="441.500" rx="7" ry="8.500" fill="#f7f2e6"/><path d="M913 438c1-6 6-9 11-8.500 5 .8 7.500 6 4.500 12-1.500-3-5-6-9.500-6.500-3 0-5 1-6 3z" fill="#6a3a20"/><path d="M916 445c2 1.300 4 1.300 6-.5" stroke="#3a2a1a" stroke-width=".8" fill="none"/><circle cx="914" cy="444.500" r="1.800" fill="#f2b0a8"/>
    <!-- mint glyph -->
    <text x="1036" y="520" font-size="50" font-weight="500" font-family="Noto Sans CJK SC,sans-serif" text-anchor="middle" fill="#a9d9c6" stroke="#a9d9c6" stroke-width="1.300" stroke-linejoin="round" stroke-linecap="round" transform="rotate(-24 1036 503)">啊</text>

    <!-- === bowl === -->
    <ellipse cx="923" cy="589" rx="38" ry="32.700" fill="#4a2c12"/>
    <ellipse cx="923" cy="590" rx="35" ry="30" fill="#e4432a"/>
    <path d="M888 580c6-16 20-24 35-24s29 8 35 24c-8-11-17-15.500-29-16v14c0 6-8 6-8 0l-.5-14c-12 .5-24 5-32.500 16z" fill="#5a3a14"/>
    <path d="M885 591c14 0 40-2 62 .5l13 2c-3 16-18 27-37 27-20 0-36-12-38-29.500z" fill="#e8c42c" clip-path="url(#cpBowl)"/>
    <path d="M887 589c8 20 20 30 36 31 14-1 24-10 29-24" fill="none" stroke="#3fc4d2" stroke-width="3.300" clip-path="url(#cpBowl)"/>
    <path d="M963 592l85 .8v2.800l-85-.6z" fill="#3fc4d2"/>
    <path d="M943 591c2-5 8-6 13-4l9 3.500c2 1 1 3-1 3.500l-10 3c-5 1.500-10 0-11-6z" fill="#fbfaf6"/>

    <!-- === figure 1 === -->
    <path d="M640 451c-14-1-26 8-29 24-2 14-7 25-6 38 .5 9 4 14 9 18l8-20 32-6 12 21c5-5 9-9 8-16-3-10-9-19-11-32-3-16-10-26-23-27z" fill="#5a2c20"/>
    <circle cx="612.500" cy="490" r="3.300" fill="#f6dcc8"/>
    <ellipse cx="634" cy="489" rx="19.500" ry="18" fill="#f8e2cf"/>
    <path d="M613 486c2-12 12-19 22-19 8 0 15 5 18 12-8-6-17-7-25-5-7 2-12 6-15 12z" fill="#5a2c20"/>
    <circle cx="622" cy="493" r="4" fill="#f2b7ad" opacity=".8"/><circle cx="646" cy="493" r="4" fill="#f2b7ad" opacity=".8"/>
    <circle cx="624.500" cy="484.500" r="1.500" fill="#1a1210"/><circle cx="643" cy="484.500" r="1.500" fill="#1a1210"/><path d="M629.500 488.500c2.500 2.500 6 2.500 8.500 0" stroke="#1a1210" stroke-width="1" fill="none"/>
    <rect x="640" y="550" width="19" height="55" fill="#1d2754"/><rect x="648.800" y="562" width="1.600" height="40" fill="#e8512e"/>
    <rect x="643" y="603" width="6" height="2.500" fill="#14183a"/><rect x="653" y="603" width="6" height="2.500" fill="#14183a"/>
    <rect x="634" y="504" width="18" height="48" fill="#efe87a"/>
    <path d="M630 505l-8 4-5.500 50 3.500 6 4-1 10 17 7 1 1-72z M652 505l10 4 14.500 50-2.500 7-5-1-8 16-10 1 -3-60z" fill="#f7f6f2"/>
    <path d="M630 510c-1 14 2 24 8 30M652 508c2 10 1 18-1 24" fill="none" stroke="#6a6a72" stroke-width=".9"/><circle cx="652.500" cy="530.500" r="3" fill="#7a7a82"/><path d="M634 526c-4 4-2 14 3 16" stroke="#4a4a52" stroke-width="1" fill="none"/>

    <!-- === figure 2 === -->
    <path d="M696 497c-8 2-13 9-12 21 6-3 11-9 13-17z" fill="#3a1e18"/>
    <circle cx="689.500" cy="490" r="3.300" fill="#f6dcc8"/><circle cx="731" cy="490" r="3.300" fill="#f6dcc8"/>
    <ellipse cx="710" cy="489.500" rx="19.500" ry="17.500" fill="#f8e2cf"/>
    <path d="M690 478c0-12 6-20 20-20s17 6 17 20c-10 2-27 2-37 0z" fill="#5fbfa8"/><path d="M722 479l5-1v7c-2-1-4-3-5-6z" fill="#3a1e18"/>
    <circle cx="698" cy="493.500" r="4" fill="#f2b7ad" opacity=".8"/><circle cx="722" cy="493.500" r="4" fill="#f2b7ad" opacity=".8"/>
    <circle cx="700" cy="484.500" r="1.500" fill="#1a1210"/><circle cx="718.500" cy="484.500" r="1.500" fill="#1a1210"/><path d="M705.500 488.500c2.500 2.500 5.500 2.500 8 0" stroke="#1a1210" stroke-width="1" fill="none"/>
    <path d="M690 538h7v24c-1 3-6 3-7 0z M730 536h7l1.500 25c-1 3-6 3-7 0z" fill="#f3d3c4"/>
    <path d="M702 558h28l-2 45h-7l-4-34-4 34h-7z" fill="#4fae98"/>
    <path d="M704 507l6 6 6-6c8 1 14 4 17 10l4 19-8 2v22h-30v-22l-9-2 3-19c2-6 6-9 11-10z" fill="#4fb49c"/><path d="M704 507l6 8 6-8z" fill="#f8e2cf"/>
    <rect x="714" y="524" width="9.500" height="6.500" rx="1" fill="#f4f6f6"/><rect x="715.500" y="526" width="3" height="3" fill="#6a8aa8"/>
    <rect x="709" y="603" width="5" height="3" fill="#5a6a5a"/><rect x="719" y="603" width="5" height="3" fill="#5a6a5a"/>

    <!-- === figure 3 === -->
    <path d="M779 454c-14 0-22 9-23 22-1 12-2 22 0 32 3 4 8 4 12 2l24-1c5 2 10 1 13-3 2-10 2-20 0-31-2-12-12-21-26-21z" fill="#c9a263"/>
    <circle cx="757.500" cy="490" r="3.300" fill="#f6dcc8"/><circle cx="801" cy="490" r="3.300" fill="#f6dcc8"/>
    <ellipse cx="779" cy="489.500" rx="19.500" ry="17.500" fill="#f8e2cf"/>
    <path d="M759 487c1-12 8-20 20-20 5 0 9 1 12 4-4 8-16 13-32 16z M791 471c5 3 8 9 8 16-3-4-6-9-8-16z" fill="#c9a263"/>
    <circle cx="767" cy="493.500" r="4" fill="#f2b7ad" opacity=".8"/><circle cx="791" cy="493.500" r="4" fill="#f2b7ad" opacity=".8"/>
    <circle cx="769.500" cy="484.500" r="1.500" fill="#1a1210"/><circle cx="788" cy="484.500" r="1.500" fill="#1a1210"/><path d="M775 488.500c2.500 2.500 5.500 2.500 8 0" stroke="#1a1210" stroke-width="1" fill="none"/>
    <rect x="768" y="578" width="9" height="26" fill="#85765c"/><rect x="780" y="578" width="9" height="26" fill="#85765c"/>
    <path d="M770 507h18c6 1 9 4 10 9l5 44-3 3-4-1 .5 18-16 3-17-3 1-18-7 1-4-3 6-44c1-5 5-8 10.500-9z" fill="#f7f6f2"/>
    <path d="M774 508h10l-4 27z" fill="#8ab4de"/><path d="M779.500 535v46" stroke="#d8d6d0" stroke-width=".8"/>

    <!-- === figure 4 === -->
    <path d="M856 449c-16-2-28 8-31 22-3 10-9 20-8 33 1 10 4 20 11 26l14-14 28 2 16 14c6-5 8-12 7-19 3-8 0-14-2-20 2-8 0-15-4-21-3-13-15-21-31-23z" fill="#2c1511"/>
    <ellipse cx="853.500" cy="488.500" rx="18" ry="18" fill="#6e4332"/>
    <path d="M835.500 486c1-10 8-18 18-18 9 0 16 5 18 14-10-6-24-6-36 4z" fill="#2c1511"/>
    <circle cx="845.500" cy="485" r="5" fill="#7a4a3a" stroke="#f0d8d8" stroke-width="1.200"/><circle cx="862.500" cy="485" r="5" fill="#7a4a3a" stroke="#f0d8d8" stroke-width="1.200"/><path d="M850.500 485h7" stroke="#f0d8d8" stroke-width="1"/>
    <circle cx="845.500" cy="485" r="1.300" fill="#1a0e0c"/><circle cx="862.500" cy="485" r="1.300" fill="#1a0e0c"/>
    <circle cx="843" cy="494" r="3.300" fill="#8a4a40" opacity=".6"/><circle cx="866" cy="494" r="3.300" fill="#8a4a40" opacity=".6"/>
    <path d="M836 550h21l-3 49-6 2-2-32-3 32-6-2z" fill="#5f7f94"/>
    <rect x="842" y="507" width="16" height="46" fill="#8c52a4"/>
    <path d="M845 506l-8 3c-4 2-6 5-8 10l-12 38 1 5 6 3 5-6-2 20 22 4z" fill="#f7f6f2"/>
    <path d="M858 506l9 3c6 2 10 7 11 13l3 15c0 6-2 10-7 13l-2 26-19 6-1-32z" fill="#f7f6f2"/>
    <path d="M820 562l6 3-1 6c-3 1-5-1-6-4z" fill="#5a3428"/>
    <path d="M857 529l10-5 3 4 1 22-12 4z" fill="#6e6e76"/><path d="M858 548l9-2 1 8-7 3z" fill="#6e4332"/>

    <!-- grain overlay -->
    <rect x="603" y="279" width="466" height="350" filter="url(#grain)" opacity=".10"/>
  </svg>
  <!-- ===== remote taskbar ===== -->
  <div class="abs" style="left:0;top:637px;width:1047px;height:33px;background:linear-gradient(90deg,#17122f 0%,#1d1740 8%,#241c52 18%,#2d2a78 27%,#2b2874 34%,#2a2568 48%,#292262 60%,#2d2670 72%,#2a2468 80%,#2b2466 88%,#2c2468 100%)"></div>
  <svg class="abs" style="left:190px;top:637px" width="500" height="33" viewBox="0 0 500 33"><path d="M40 33L120 0h60L90 33z" fill="#3a3f9a" opacity=".35"/><path d="M150 33L260 0h40L200 33z" fill="#4a4aa8" opacity=".22"/><path d="M0 33L60 0h20L30 33z" fill="#5a58b0" opacity=".18"/></svg>
  <svg class="abs" style="left:760px;top:637px" width="287" height="33" viewBox="0 0 287 33"><path d="M30 0c20 10 40 20 50 33h30C95 18 80 8 60 0z" fill="#1c1848" opacity=".6"/><path d="M170 0c25 8 60 18 117 22V0z" fill="#3a2f86" opacity=".45"/></svg>
  <div class="abs" style="left:0;top:669px;width:1047px;height:7px;background:linear-gradient(180deg,#14112a,#0c0c10 60%)"></div>
  <!-- start -->
  <svg class="abs" style="left:13px;top:645px" width="17" height="17" viewBox="0 0 17 17"><defs><linearGradient id="wg" x1="0" y1="0" x2="1" y2="1"><stop offset="0" stop-color="#5fd0ff"/><stop offset="1" stop-color="#1a8fe0"/></linearGradient></defs><rect x="0" y="0" width="8" height="8" rx=".8" fill="url(#wg)"/><rect x="9" y="0" width="8" height="8" rx=".8" fill="url(#wg)"/><rect x="0" y="9" width="8" height="8" rx=".8" fill="url(#wg)"/><rect x="9" y="9" width="8" height="8" rx=".8" fill="url(#wg)"/></svg>
  <!-- search pill -->
  <div class="abs" style="left:39px;top:642px;width:150px;height:22px;border-radius:11px;background:linear-gradient(90deg,#d6cfe0,#d2cadd 55%,#c9c1d6)"></div>
  <svg class="abs" style="left:47px;top:647px" width="12" height="12" viewBox="0 0 12 12" fill="none" stroke="#2a2a3a" stroke-width="1.300" stroke-linecap="round"><circle cx="5" cy="5" r="3.600"/><path d="M7.800 7.800l3 3"/></svg>
  <div class="abs" style="left:64px;top:647px;font-size:10px;line-height:12px;color:#6a6478;white-space:nowrap">搜索</div>
  <svg class="abs" style="left:154px;top:644px" width="32" height="19" viewBox="0 0 32 19"><path d="M2 4c1-2 5-2 6 0l-1 1.500H3z M9 3c1-2 5-2 6 0l-1 1.500h-4z" fill="#d9cfa4"/><path d="M4.500 5.500v11M6 5.500v11M11.500 4.500v12M13 4.500v12M8.500 7v9.500" stroke="#c9bf92" stroke-width="1"/><path d="M13 2l16 14" stroke="#6e6a52" stroke-width="1.300"/><path d="M22 10l8 7h-9z" fill="#d8d0b0" opacity=".9"/></svg>
  <!-- icons -->
  <svg class="abs" style="left:195px;top:643px" width="21" height="21" viewBox="0 0 21 21"><defs><linearGradient id="eg" x1="0" y1="0" x2="1" y2="1"><stop offset="0" stop-color="#35c1f1"/><stop offset=".5" stop-color="#1b9de2"/><stop offset="1" stop-color="#0c59a4"/></linearGradient></defs><circle cx="10.500" cy="10.500" r="9.500" fill="url(#eg)"/><path d="M3 13c0-5 4-8 8-8 5 0 8 3.500 7 7-1 2-4 2.500-6 1.500 1-1 1-3-1-3.500-3-.5-5 2-4 5 .5 1.500 2 3 4 3.500-4 .5-8-2-8-5.500z" fill="#6bdc8c" opacity=".85"/></svg>
  <svg class="abs" style="left:225px;top:643px" width="21" height="21" viewBox="0 0 21 21"><path d="M1.500 11C2 5 6 1.500 11 1.500c5 0 8.500 3.500 8.500 8v2h-12c.5 3 4 4.500 9 2.500v4c-7 3-14-.5-15-7zm6-2h6.500c0-2-1.500-3.300-3.300-3.300S7.800 7 7.500 9z" fill="#2fb6ea"/><path d="M2 8c3-4 9-5 14-3" stroke="#7be0a0" stroke-width="1.800" fill="none"/><rect x="11" y="13" width="9" height="7" rx="2" fill="#7a3fd0"/><text x="15.500" y="18.500" font-size="5.500" font-weight="700" fill="#fff" text-anchor="middle" font-family="Liberation Sans,sans-serif">Ai</text></svg>
  <svg class="abs" style="left:256px;top:643px" width="21" height="21" viewBox="0 0 21 21"><circle cx="10.500" cy="10.500" r="9.500" fill="#1f6fe0"/><path d="M3 15A9.500 9.500 0 0 0 20 10.500c-3 5-10 7-17 4.500z" fill="#0d3fa8"/><path d="M8 4.500h3.300v9H16v3H8z" fill="#fff"/></svg>
  <svg class="abs" style="left:285px;top:643px" width="21" height="21" viewBox="0 0 21 21"><circle cx="10.500" cy="10.500" r="9.800" fill="#fdfdfd"/><path d="M5.500 8v3a2.500 2.500 0 0 0 5 0V8M10.500 8v3a2.500 2.500 0 0 0 5 0V8" fill="none" stroke="#2aa8a8" stroke-width="1.600" stroke-linecap="round"/></svg>
  <svg class="abs" style="left:316px;top:644px" width="19" height="19" viewBox="0 0 19 19"><rect width="19" height="19" rx="3.500" fill="#4a0624"/><text x="9.500" y="13.500" font-size="10.500" font-weight="700" fill="#ff3f6e" text-anchor="middle" font-family="Liberation Sans,sans-serif">Id</text></svg>
  <svg class="abs" style="left:346px;top:644px" width="20" height="19" viewBox="0 0 20 19"><path d="M2 3.500A2.500 2.500 0 0 1 4.500 1h11A2.500 2.500 0 0 1 18 3.500l1.500 12A2.500 2.500 0 0 1 17 18.500H3A2.500 2.500 0 0 1 .5 15.500z" fill="#1cc468"/><path d="M6.500 7c.8 3 6.200 3 7 0" fill="none" stroke="#fff" stroke-width="1.600" stroke-linecap="round"/></svg>
  <svg class="abs" style="left:375px;top:645px" width="22" height="17" viewBox="0 0 22 17"><path d="M1 1h4.500l2 9 3-9h3.500l-5 15H5.500z" fill="#e5251d"/><path d="M9 16L14 1h3.500l1.500 7 1.500-7H22l-3.500 15h-3.500l-2-8-2 8z" fill="#f0392c"/></svg>
  <svg class="abs" style="left:407px;top:644px" width="19" height="19" viewBox="0 0 19 19"><rect width="19" height="19" rx="3.500" fill="#071d34"/><text x="9.500" y="13.300" font-size="10" font-weight="700" fill="#31a8ff" text-anchor="middle" font-family="Liberation Sans,sans-serif">Ps</text></svg>
  <div class="abs" style="left:433px;top:639px;width:27px;height:28px;border-radius:3px;background:#e9a8a4"></div>
  <div class="abs" style="left:436px;top:665px;width:21px;height:2px;border-radius:1px;background:#e33a3a"></div>
  <svg class="abs" style="left:437px;top:643px" width="19" height="19" viewBox="0 0 19 19"><rect width="19" height="19" rx="4" fill="#1fb141"/><ellipse cx="7.500" cy="8" rx="4.800" ry="4" fill="#fff"/><path d="M4.500 11l-.8 2 2.300-1.200z" fill="#fff"/><ellipse cx="12.300" cy="11.500" rx="3.800" ry="3.200" fill="#e8f8ea" stroke="#1fb141" stroke-width=".7"/><circle cx="6" cy="7" r=".7" fill="#1fb141"/><circle cx="9" cy="7" r=".7" fill="#1fb141"/></svg>
  <svg class="abs" style="left:466px;top:643px" width="20" height="20" viewBox="0 0 20 20"><rect width="20" height="20" rx="4.500" fill="#f4f8fc"/><path d="M4 6h8v3H9.500v8h-3V9H4z" fill="#1483e6"/><path d="M12 4h4.500v3H15v4h-3z" fill="#0b5fc0"/></svg>
  <svg class="abs" style="left:494px;top:644px" width="22" height="19" viewBox="0 0 22 19"><path d="M1 2.500A1.500 1.500 0 0 1 2.500 1H8l2 2.500h9.500A1.500 1.500 0 0 1 21 5v12.500H1z" fill="#f5b92e"/><path d="M1 6h20v11.500a1 1 0 0 1-1 1H2a1 1 0 0 1-1-1z" fill="#fdd55b"/><rect x="6" y="12" width="10" height="6.500" fill="#1a7ad8"/></svg>
  <svg class="abs" style="left:526px;top:644px" width="19" height="19" viewBox="0 0 19 19"><rect width="19" height="19" rx="4.500" fill="#050505"/><path d="M4 6.500h6.500l4.500 6H8.500zM4 12.500h6.500l4.500-6H8.500z" fill="none" stroke="#fff" stroke-width="1.300" stroke-linejoin="round"/></svg>
  <svg class="abs" style="left:556px;top:644px" width="20" height="19" viewBox="0 0 20 19"><rect width="20" height="19" rx="3.500" fill="#0b1642"/><circle cx="10" cy="9.500" r="7" fill="#fff"/><path d="M4 9.500l3.500-2.500v1.600h5V7L16 9.500 12.500 12v-1.600h-5V12z" fill="#0b1642"/></svg>
  <!-- tray -->
  <div class="abs" style="left:874px;top:637px;width:29px;height:21px;border-radius:0 0 4px 4px;background:rgba(74,74,104,.55)"></div>
  <svg class="abs" style="left:744px;top:642px" width="18" height="24" viewBox="0 0 18 24"><path d="M1 7h1.200v3M3 7h1.200v3M.5 7h4.500" stroke="#dcdcf0" stroke-width=".8" fill="none"/><path d="M7.500 6a1.500 1.500 0 0 1 3 0v8a3.300 3.300 0 1 1-3 0z" fill="none" stroke="#39b8f4" stroke-width="1.300"/><circle cx="9" cy="17" r="1.800" fill="#39b8f4"/><circle cx="10.500" cy="5" r="4.300" fill="#e4332b"/><text x="10.500" y="7.300" font-size="6.500" font-weight="700" fill="#fff" text-anchor="middle" font-family="Liberation Sans,sans-serif">1</text></svg>
  <div class="abs" style="left:764px;top:642.500px;font-size:8px;line-height:10px;color:#141232;white-space:nowrap;opacity:.85">体感温度更低</div>
  <div class="abs" style="left:764px;top:654px;font-size:8px;line-height:10px;color:#1a1840;white-space:nowrap;opacity:.7">现在</div>
  <svg class="abs" style="left:852px;top:648px" width="8" height="6" viewBox="0 0 8 6" fill="none" stroke="#1a1840" stroke-width="1"><path d="M1 5l3-3.500L7 5"/></svg>
  <svg class="abs" style="left:870px;top:646px" width="14" height="10" viewBox="0 0 14 10"><path d="M3.500 9.500a3 3 0 0 1-.3-6A4 4 0 0 1 11 4.500a2.600 2.600 0 0 1-.3 5z" fill="#f2f2f6"/><path d="M3 9.500c2-2 6-3 9.500-1.500-.3 1-1 1.500-2 1.500z" fill="#c9c9d4"/></svg>
  <div class="abs" style="left:891px;top:645px;width:14px;height:14px;border-radius:50%;background:#1c1a44;opacity:.8"></div>
  <div class="abs" style="left:899.500px;top:654px;width:7px;height:7px;border-radius:50%;background:#1e86e8"></div>
  <div class="abs" style="left:916px;top:646px;font-size:10px;line-height:12px;color:#15133a;opacity:.75">英</div>
  <svg class="abs" style="left:938px;top:648px" width="32" height="10" viewBox="0 0 32 10" fill="none" stroke="#1a1840" stroke-width="1" opacity=".6"><path d="M1 4c3-3.500 8-3.500 11 0M3 6c2-2 5-2 7 0"/><path d="M20 3.500h2l2.500-2.500v8L22 6.500h-2z"/></svg>
  <svg class="abs" style="left:970px;top:647px" width="16" height="10" viewBox="0 0 16 10"><rect x=".5" y="1.500" width="13" height="7" rx="1.500" fill="#12102e" opacity=".85"/><rect x="14" y="3.500" width="1.500" height="3" fill="#12102e" opacity=".8"/><path d="M3 1l3-1 7 3" stroke="#12102e" stroke-width="1.200" fill="none"/></svg>
  <div class="abs" style="left:990px;top:642.500px;width:46px;text-align:right;font-size:8px;line-height:10px;color:#14123a;opacity:.8">0:02</div>
  <div class="abs" style="left:980px;top:654px;width:56px;text-align:right;font-size:8px;line-height:10px;color:#14123a;opacity:.8">2025/11/14</div>

</div></div>
</body>
</html>
